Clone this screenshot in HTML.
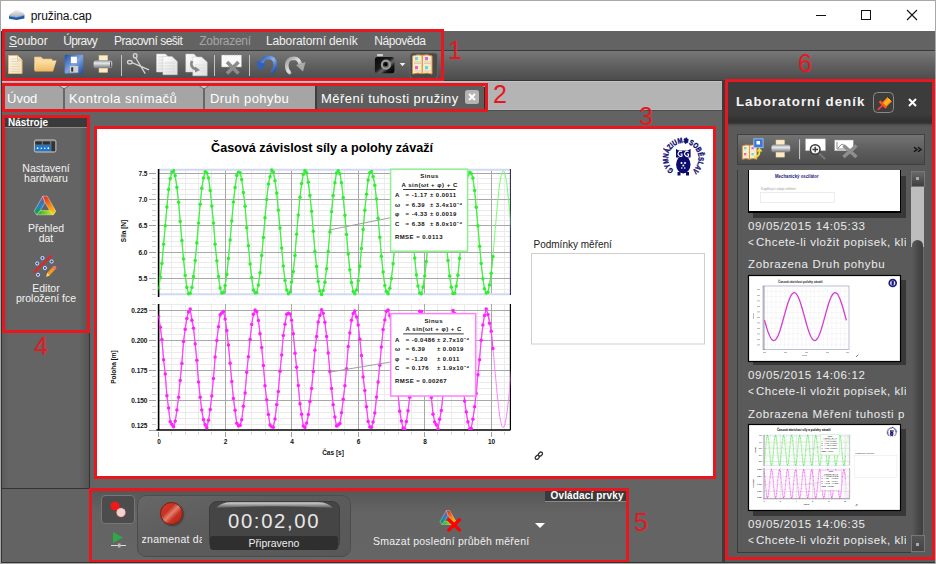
<!DOCTYPE html><html><head><meta charset="utf-8"><style>
*{margin:0;padding:0;box-sizing:content-box}
html,body{width:936px;height:564px;overflow:hidden;background:#636363}
body{position:relative;font-family:"Liberation Sans",sans-serif}
.a{position:absolute}
.rb{position:absolute;border:3px solid #e8171f;}
.rn{position:absolute;color:#e8171f;font-family:"Liberation Sans",sans-serif;line-height:1}
.menu span{position:absolute;top:34px;font-size:12px;color:#f0f0f0;white-space:nowrap;letter-spacing:-0.3px}
.tab{position:absolute;top:87px;height:23px;font-size:13px;color:#fff;white-space:nowrap;line-height:23px;letter-spacing:0.44px}
.tool{position:absolute;width:88px;text-align:center;font-size:10.5px;color:#f2f2f2;line-height:10px}
.jt{position:absolute;left:748px;font-size:11.5px;color:#ececec;white-space:nowrap;letter-spacing:0.63px}
</style></head><body>

<div class="a" style="left:0;top:0;width:936px;height:31px;background:#fff;border-top:1px solid #a8a8a8;box-sizing:border-box"></div>

<svg class="a" style="left:0;top:0" width="30" height="30" viewBox="0 0 30 30"><defs><linearGradient id="tig" x1="0" y1="0" x2="0" y2="1"><stop offset="0" stop-color="#f4f4f6"/><stop offset="1" stop-color="#a8acb4"/></linearGradient></defs><path d="M9 15 L16.3 9.6 L24.4 13.6 L24.4 15.6 L16.5 17.4 L9 16.4 Z" fill="url(#tig)"/><path d="M9 15.9 L16.5 17.3 L24.4 15.3 L24.4 18.6 L16.5 20 L9 18.7 Z" fill="#1f5aa4"/><path d="M9 15.9 L16.5 17.3 L24.4 15.3" fill="none" stroke="#7fa4d8" stroke-width="0.6"/></svg>
<div class="a" style="left:30.7px;top:9.3px;font-size:12px;color:#111;letter-spacing:-0.1px">pružina.cap</div>
<div class="a" style="left:816px;top:15px;width:10px;height:1px;background:#111"></div>
<div class="a" style="left:861px;top:10px;width:8px;height:8px;border:1px solid #111"></div>
<svg class="a" style="left:906px;top:9px" width="12" height="12" viewBox="0 0 12 12"><path d="M1 1 L11 11 M11 1 L1 11" stroke="#111" stroke-width="1.1"/></svg>

<div class="a" style="left:1px;top:31px;width:934px;height:19px;background:#636363"></div>
<div class="a" style="left:1px;top:50px;width:934px;height:1px;background:#3a3a3a"></div>
<div class="menu">
<span style="left:9px;letter-spacing:0"><u>S</u>oubor</span>
<span style="left:63.3px;letter-spacing:-0.7px">Úpravy</span>
<span style="left:114px;letter-spacing:-0.5px">Pracovní sešit</span>
<span style="left:199.3px;color:#a6a6a6;letter-spacing:-0.28px">Zobrazení</span>
<span style="left:266px;letter-spacing:-0.14px">Laboratorní deník</span>
<span style="left:374.3px;letter-spacing:-0.43px">Nápověda</span>
</div>

<div class="a" style="left:1px;top:51px;width:934px;height:29px;background:linear-gradient(#787878,#646464 40%,#4c4c4c)"></div>

<svg class="a" style="left:0;top:50px" width="936" height="31" viewBox="0 50 936 31">
<defs>
<linearGradient id="gpaper" x1="0" y1="0" x2="1" y2="1"><stop offset="0" stop-color="#fffaf0"/><stop offset="1" stop-color="#f5dfb0"/></linearGradient>
<linearGradient id="gfold" x1="0" y1="0" x2="0" y2="1"><stop offset="0" stop-color="#fde2a8"/><stop offset="1" stop-color="#f0b860"/></linearGradient>
<linearGradient id="gsave" x1="0" y1="0" x2="1" y2="1"><stop offset="0" stop-color="#1e4fa8"/><stop offset="0.5" stop-color="#7fa4e0"/><stop offset="1" stop-color="#1c4aa0"/></linearGradient>
<linearGradient id="gprn" x1="0" y1="0" x2="0" y2="1"><stop offset="0" stop-color="#8a8e92"/><stop offset="0.35" stop-color="#e8eaec"/><stop offset="1" stop-color="#6a6e72"/></linearGradient>
<linearGradient id="gpg" x1="0" y1="0" x2="1" y2="1"><stop offset="0" stop-color="#ffffff"/><stop offset="1" stop-color="#dcdcdc"/></linearGradient>
<linearGradient id="gundo" x1="0" y1="0" x2="1" y2="1"><stop offset="0" stop-color="#2a60c8"/><stop offset="0.5" stop-color="#8ab4f0"/><stop offset="1" stop-color="#1a4ab0"/></linearGradient>
<linearGradient id="gredo" x1="0" y1="0" x2="1" y2="1"><stop offset="0" stop-color="#9a9a9a"/><stop offset="0.5" stop-color="#e0e0e0"/><stop offset="1" stop-color="#8a8a8a"/></linearGradient>
<linearGradient id="gcam" x1="0" y1="0" x2="1" y2="1"><stop offset="0" stop-color="#080808"/><stop offset="0.45" stop-color="#1a1a1a"/><stop offset="0.6" stop-color="#6a6a6a"/><stop offset="0.75" stop-color="#141414"/><stop offset="1" stop-color="#000"/></linearGradient>
</defs>
<!-- new doc -->
<path d="M8.5 55.5 H17.5 L22 60 V73.5 H8.5 Z" fill="url(#gpaper)" stroke="#e2b878" stroke-width="1"/>
<path d="M17.5 55.5 V60 H22" fill="#f8e8c8" stroke="#e2b878" stroke-width="0.8"/>
<g stroke="#d8d0c0" stroke-width="0.8"><line x1="10.5" y1="59" x2="16" y2="59"/><line x1="10.5" y1="61.5" x2="20" y2="61.5"/><line x1="10.5" y1="64" x2="20" y2="64"/><line x1="10.5" y1="66.5" x2="20" y2="66.5"/><line x1="10.5" y1="69" x2="20" y2="69"/><line x1="10.5" y1="71.5" x2="20" y2="71.5"/></g>
<!-- folder -->
<path d="M34.5 57 H41 L43 59 H52 V70 H34.5 Z" fill="#f6d8a0" stroke="#e8c080" stroke-width="0.6"/>
<path d="M37.5 60.5 H56.5 L53 71.5 H34.5 Z" fill="url(#gfold)"/>
<!-- save -->
<rect x="64.7" y="54.7" width="18.6" height="18.9" rx="1.2" fill="url(#gsave)"/>
<rect x="70.9" y="56.7" width="6" height="6.4" fill="#fff"/>
<rect x="69.9" y="66" width="8.3" height="6.6" fill="#d0d0d0"/><rect x="71.2" y="67.2" width="2" height="4.4" fill="#333"/>
<!-- printer -->
<rect x="99" y="55.4" width="8.7" height="6" fill="#fbecc8" stroke="#e8c890" stroke-width="0.5"/>
<rect x="93.6" y="60.2" width="18.6" height="8.3" rx="2.5" fill="url(#gprn)"/>
<rect x="110" y="62" width="1.2" height="5" fill="#555"/>
<rect x="99" y="68.2" width="8.7" height="4.2" fill="#fbecc8" stroke="#e8c890" stroke-width="0.5"/>
<line x1="121.5" y1="55" x2="121.5" y2="76" stroke="#c4c4c4" stroke-width="1"/>
<!-- scissors -->
<g stroke="#d4d4d4" stroke-width="1.3" fill="none"><ellipse cx="135.2" cy="55.8" rx="1.8" ry="2.2"/><ellipse cx="129.8" cy="62.2" rx="2.3" ry="1.7"/><path d="M135.8 58 L145.2 73.6 M132 62.6 L149 69.9"/></g>
<!-- copy -->
<path d="M156.5 54 H165.5 L170.4 59 V72 H156.5Z" fill="url(#gpg)" stroke="#c8c8c8" stroke-width="0.5"/>
<g stroke="#d0d0d0" stroke-width="0.7"><line x1="158" y1="57" x2="164" y2="57"/><line x1="158" y1="60" x2="168" y2="60"/><line x1="158" y1="63" x2="168" y2="63"/><line x1="158" y1="66" x2="168" y2="66"/><line x1="158" y1="69" x2="168" y2="69"/></g>
<path d="M162.9 56.5 H172 L177.3 61.5 V74.7 H162.9Z" fill="url(#gpg)" stroke="#c8c8c8" stroke-width="0.5"/>
<g stroke="#d0d0d0" stroke-width="0.7"><line x1="164.5" y1="63" x2="175" y2="63"/><line x1="164.5" y1="66" x2="175" y2="66"/><line x1="164.5" y1="69" x2="175" y2="69"/><line x1="164.5" y1="72" x2="175" y2="72"/></g>
<!-- paste -->
<path d="M185.8 54 H194 L197.6 58 V72 H185.8Z" fill="url(#gpg)" stroke="#c8c8c8" stroke-width="0.5"/>
<path d="M192.8 57 H201.5 L207.2 62 V75.8 H192.8Z" fill="url(#gpg)" stroke="#c8c8c8" stroke-width="0.5"/>
<g stroke="#d8d8d8" stroke-width="0.7"><line x1="195" y1="65" x2="205" y2="65"/><line x1="195" y1="68" x2="205" y2="68"/><line x1="195" y1="71" x2="205" y2="71"/></g>
<path d="M192 61 Q189.5 67 196 69.5" fill="none" stroke="#888" stroke-width="2.6"/><path d="M195 66.5 L200 70 L195 72.5 Z" fill="#888"/>
<line x1="214.5" y1="55" x2="214.5" y2="76" stroke="#c4c4c4" stroke-width="1"/>
<!-- delete -->
<rect x="221.5" y="55" width="20" height="12" fill="#fafafa" stroke="#aaa" stroke-width="0.8" stroke-dasharray="1.5 1"/>
<path d="M227 62 L238.5 73.5 M238.5 62 L227 73.5" stroke="#8c8c8c" stroke-width="3.6"/>
<line x1="249.5" y1="55" x2="249.5" y2="76" stroke="#c4c4c4" stroke-width="1"/>
<!-- undo -->
<path d="M261.5 63.5 Q263 57.5 268 57.3 Q275 57.3 275.3 64.5 Q275.3 69 272.5 71.5" fill="none" stroke="url(#gundo)" stroke-width="3.6" stroke-linecap="round"/>
<path d="M256.5 61 L266 64 L259 70.5 Z" fill="#2a62c8"/>
<!-- redo -->
<path d="M300.5 64.5 Q299 58.5 294 58.3 Q287 58.3 286.7 65.5 Q286.7 70 289.5 72.5" fill="none" stroke="url(#gredo)" stroke-width="3.6" stroke-linecap="round"/>
<path d="M305.5 62 L296 65 L303 71.5 Z" fill="#a8a8a8"/>
<!-- camera -->
<rect x="377" y="54" width="6" height="2.2" rx="0.8" fill="#cfcfcf"/>
<rect x="374.9" y="56.9" width="19.5" height="16.3" rx="2.5" fill="url(#gcam)"/>
<circle cx="385.9" cy="64.7" r="4" fill="none" stroke="#9a9a9a" stroke-width="2.2"/><circle cx="385.9" cy="64.7" r="1.6" fill="#000"/>
<path d="M399.7 63 H405.4 L402.5 66.3 Z" fill="#f0f0f0"/>
<!-- book button -->
<rect x="410" y="53" width="27.5" height="25.5" rx="3" fill="#4a4a4a" stroke="#6a6a6a" stroke-width="0.8"/>
<path d="M412.5 56 Q417 54.2 422.3 55.2 V73.5 Q417 72.5 412.5 74 Z" fill="#fbecc8" stroke="#d89040" stroke-width="1"/>
<path d="M422.3 55.2 Q427.5 54.2 432 56 V74 Q427.5 72.5 422.3 73.5 Z" fill="#fbecc8" stroke="#d89040" stroke-width="1"/>
<rect x="415" y="57" width="3" height="3.2" fill="#60d8e8"/><rect x="425" y="57" width="3" height="3.2" fill="#e060e0"/><rect x="415" y="66" width="3" height="3.2" fill="#e060e0"/><rect x="425" y="66" width="3" height="3.2" fill="#60d8e8"/>
<g stroke="#c8b898" stroke-width="0.6"><line x1="414" y1="62" x2="421" y2="62"/><line x1="414" y1="63.5" x2="421" y2="63.5"/><line x1="424" y1="62" x2="431" y2="62"/><line x1="424" y1="63.5" x2="431" y2="63.5"/><line x1="414" y1="71" x2="421" y2="71"/><line x1="424" y1="71" x2="431" y2="71"/></g>
</svg>

<div class="a" style="left:1px;top:80px;width:721px;height:1px;background:#363636"></div>
<div class="a" style="left:1px;top:81px;width:721px;height:29px;background:#b4b4b4;border-top:1px solid #c4c4c4;border-bottom:1px solid #bcbcbc;box-sizing:border-box"></div>
<div class="a" style="left:5px;top:86px;width:310px;height:23px;background:#a5a5a5"></div>
<div class="a" style="left:1px;top:110px;width:721px;height:1px;background:#4c4c4c"></div>
<div class="a" style="left:63px;top:87px;width:2px;height:22px;background:#676767"></div>
<div class="a" style="left:203px;top:87px;width:2px;height:22px;background:#676767"></div>
<svg class="a" style="left:58px;top:85px" width="12" height="4"><path d="M1 0.5 L5 3.5 H7 L11 0.5" fill="#c8c8c8" stroke="#6a6a6a" stroke-width="1"/></svg>
<svg class="a" style="left:198px;top:85px" width="12" height="4"><path d="M1 0.5 L5 3.5 H7 L11 0.5" fill="#c8c8c8" stroke="#6a6a6a" stroke-width="1"/></svg>
<div class="a" style="left:315px;top:86px;width:2px;height:23px;background:#3e3e3e"></div>
<div class="a" style="left:317px;top:86px;width:168px;height:23px;background:#5e5e5e;border-top-right-radius:3px"></div>
<div class="a" style="left:484px;top:87px;width:1px;height:22px;background:#2e2e2e"></div>
<div class="tab" style="left:7px;letter-spacing:0">Úvod</div>
<div class="tab" style="left:69px">Kontrola snímačů</div>
<div class="tab" style="left:210px">Druh pohybu</div>
<div class="tab" style="left:321px">Měření tuhosti pružiny</div>
<div class="a" style="left:465px;top:90px;width:14px;height:14px;background:#b4b4b4;border-radius:2.5px"></div>
<svg class="a" style="left:465px;top:90px" width="14" height="14"><path d="M4 4 L10 10 M10 4 L4 10" stroke="#fff" stroke-width="2"/></svg>

<div class="a" style="left:722px;top:80px;width:3px;height:484px;background:#3c3c3c"></div>
<div class="a" style="left:1px;top:116px;width:88px;height:372px;background:linear-gradient(90deg,#5a5a5a,#646464 8px,#646464 78px,#545454)"></div>
<div class="a" style="left:89px;top:116px;width:1px;height:372px;background:#333"></div>
<div class="a" style="left:5px;top:118px;width:82px;height:9px;background:#3a3a3a;border-bottom:1px solid #8a8a8a"></div>
<div class="a" style="left:8px;top:117px;font-size:10px;font-weight:bold;color:#fff">Nástroje</div>
<div class="a" style="left:1px;top:488px;width:89px;height:1px;background:#333"></div>

<svg class="a" style="left:26px;top:132px" width="40" height="28" viewBox="26 132 40 28"><rect x="34.4" y="140" width="21.5" height="12" rx="1.5" fill="#6a6a6a" stroke="#d0d0d0" stroke-width="0.9"/><rect x="35.3" y="141.6" width="6.4" height="3" rx="0.8" fill="#2e2e2e"/><rect x="43" y="141.6" width="6.8" height="3" rx="0.8" fill="#2e2e2e"/><rect x="35" y="145.3" width="16" height="5.8" rx="1" fill="#1a7ad0"/><g fill="#fff"><circle cx="37.6" cy="148.2" r="0.9"/><circle cx="41.3" cy="148.2" r="0.8"/><circle cx="44.8" cy="148.2" r="0.8"/><circle cx="48.3" cy="148.2" r="0.9"/></g><rect x="51.5" y="141.5" width="3.6" height="9.6" fill="#333"/></svg>
<div class="tool" style="left:2px;top:163px">Nastavení<br>hardwaru</div>
<svg class="a" style="left:33px;top:195px" width="24" height="21" viewBox="0 0 24 21"><defs><linearGradient id="tgl" gradientUnits="userSpaceOnUse" x1="3" y1="19" x2="12" y2="1"><stop offset="0" stop-color="#10a040"/><stop offset="0.5" stop-color="#2080d0"/><stop offset="1" stop-color="#c04050"/></linearGradient>
<linearGradient id="tgr" gradientUnits="userSpaceOnUse" x1="12" y1="1" x2="21" y2="19"><stop offset="0" stop-color="#e02828"/><stop offset="0.5" stop-color="#f88010"/><stop offset="1" stop-color="#ffd800"/></linearGradient>
<linearGradient id="tgb" gradientUnits="userSpaceOnUse" x1="4" y1="0" x2="21" y2="0"><stop offset="0" stop-color="#10b030"/><stop offset="1" stop-color="#f0f000"/></linearGradient>
<symbol id="tri" viewBox="0 0 24 21"><g stroke="#f0f0f0" stroke-width="0.45" stroke-linejoin="round">
<path d="M3.6 19.8 L7.2 15.6 L16.8 15.6 L20.4 19.8 Z" fill="url(#tgb)"/>
<path d="M1.2 16.2 L9.8 1.2 L12 7.4 L7.2 15.6 L3.6 19.8 Z" fill="url(#tgl)"/>
<path d="M9.8 1.2 L14.2 1.2 L22.8 16.2 L20.4 19.8 L16.8 15.6 L12 7.4 Z" fill="url(#tgr)"/>
</g></symbol></defs><use href="#tri" x="0" y="0" width="24" height="21"/></svg>
<div class="tool" style="left:2px;top:223px">Přehled<br>dat</div>
<svg class="a" style="left:26px;top:250px" width="40" height="32" viewBox="26 250 40 32"><line x1="34.4" y1="272" x2="51.4" y2="255.9" stroke="#ee2020" stroke-width="1.9" stroke-linecap="round"/><g fill="#1a50f0" stroke="#f4f4f4" stroke-width="0.9"><circle cx="42.5" cy="258" r="1.6"/><circle cx="37.2" cy="263.5" r="1.6"/><circle cx="51.6" cy="261.5" r="1.6"/><circle cx="44.9" cy="268" r="1.6"/><circle cx="38" cy="274.8" r="1.6"/></g><path d="M46.2 276.8 L47.3 272.8 L53.2 266.6 L55.6 269 L49.6 275.4 Z" fill="#f59a20"/><path d="M46.2 276.8 L47.3 272.8 L49.6 275.4 Z" fill="#f0e080"/><circle cx="54.5" cy="267.6" r="1.9" fill="#f07070"/></svg>
<div class="tool" style="left:2px;top:283px">Editor<br>proložení fce</div>

<div class="a" style="left:97px;top:129px;width:616px;height:347px;background:#fff"></div>
<svg class="a" style="left:97px;top:129px" width="616" height="347" viewBox="97 129 616 347"><defs><g id="chartg">
<text x="322" y="151.5" text-anchor="middle" font-family="Liberation Sans" font-weight="bold" font-size="12.6" fill="#000">Časová závislost síly a polohy závaží</text>
<path id="mlgp" d="M673.94 170.28 A15.2 15.2 0 1 1 692.66 170.28" fill="none"/>
<text font-family="Liberation Sans" font-weight="bold" font-size="7.6" fill="#0c0c6e" stroke="#0c0c6e" stroke-width="0.35"><textPath href="#mlgp" textLength="75.3" lengthAdjust="spacingAndGlyphs">GYMNÁZIUM✱SOBĚSLAV</textPath></text>
<g fill="#0c0c6e"><path d="M676 149 L679 150.5 H687.5 L690.6 149 V157.5 L676 157.5 Z"/><ellipse cx="683.3" cy="164.5" rx="7.2" ry="9"/><rect x="677.5" y="172" width="3" height="3.5"/><rect x="686" y="172" width="3" height="3.5"/></g>
<g fill="none" stroke="#fff" stroke-width="1.1"><path d="M682 151.5 A2.6 2.6 0 1 0 682 156 V154 H680.5"/><path d="M688.5 151.5 A2.6 2.6 0 1 0 688.5 156 V154 H687"/></g>
<g fill="#fff"><circle cx="681.5" cy="163" r="1"/><circle cx="685" cy="163" r="1"/><circle cx="683.3" cy="165.5" r="1"/><circle cx="681.8" cy="168" r="0.8"/><circle cx="684.8" cy="168" r="0.8"/></g>
<rect x="158.6" y="169.0" width="351.79999999999995" height="126.0" fill="#fff"/>
<line x1="158.6" x2="510.4" y1="294.5" y2="294.5" stroke="#ebebeb" stroke-width="1"/>
<line x1="152" x2="156" y1="294.5" y2="294.5" stroke="#d0d0d0" stroke-width="1"/>
<line x1="158.6" x2="510.4" y1="289.5" y2="289.5" stroke="#ebebeb" stroke-width="1"/>
<line x1="152" x2="156" y1="289.5" y2="289.5" stroke="#d0d0d0" stroke-width="1"/>
<line x1="158.6" x2="510.4" y1="283.5" y2="283.5" stroke="#ebebeb" stroke-width="1"/>
<line x1="152" x2="156" y1="283.5" y2="283.5" stroke="#d0d0d0" stroke-width="1"/>
<line x1="158.6" x2="510.4" y1="273.5" y2="273.5" stroke="#ebebeb" stroke-width="1"/>
<line x1="152" x2="156" y1="273.5" y2="273.5" stroke="#d0d0d0" stroke-width="1"/>
<line x1="158.6" x2="510.4" y1="267.5" y2="267.5" stroke="#ebebeb" stroke-width="1"/>
<line x1="152" x2="156" y1="267.5" y2="267.5" stroke="#d0d0d0" stroke-width="1"/>
<line x1="158.6" x2="510.4" y1="262.5" y2="262.5" stroke="#ebebeb" stroke-width="1"/>
<line x1="152" x2="156" y1="262.5" y2="262.5" stroke="#d0d0d0" stroke-width="1"/>
<line x1="158.6" x2="510.4" y1="257.5" y2="257.5" stroke="#ebebeb" stroke-width="1"/>
<line x1="152" x2="156" y1="257.5" y2="257.5" stroke="#d0d0d0" stroke-width="1"/>
<line x1="158.6" x2="510.4" y1="246.5" y2="246.5" stroke="#ebebeb" stroke-width="1"/>
<line x1="152" x2="156" y1="246.5" y2="246.5" stroke="#d0d0d0" stroke-width="1"/>
<line x1="158.6" x2="510.4" y1="241.5" y2="241.5" stroke="#ebebeb" stroke-width="1"/>
<line x1="152" x2="156" y1="241.5" y2="241.5" stroke="#d0d0d0" stroke-width="1"/>
<line x1="158.6" x2="510.4" y1="236.5" y2="236.5" stroke="#ebebeb" stroke-width="1"/>
<line x1="152" x2="156" y1="236.5" y2="236.5" stroke="#d0d0d0" stroke-width="1"/>
<line x1="158.6" x2="510.4" y1="231.5" y2="231.5" stroke="#ebebeb" stroke-width="1"/>
<line x1="152" x2="156" y1="231.5" y2="231.5" stroke="#d0d0d0" stroke-width="1"/>
<line x1="158.6" x2="510.4" y1="220.5" y2="220.5" stroke="#ebebeb" stroke-width="1"/>
<line x1="152" x2="156" y1="220.5" y2="220.5" stroke="#d0d0d0" stroke-width="1"/>
<line x1="158.6" x2="510.4" y1="215.5" y2="215.5" stroke="#ebebeb" stroke-width="1"/>
<line x1="152" x2="156" y1="215.5" y2="215.5" stroke="#d0d0d0" stroke-width="1"/>
<line x1="158.6" x2="510.4" y1="210.5" y2="210.5" stroke="#ebebeb" stroke-width="1"/>
<line x1="152" x2="156" y1="210.5" y2="210.5" stroke="#d0d0d0" stroke-width="1"/>
<line x1="158.6" x2="510.4" y1="204.5" y2="204.5" stroke="#ebebeb" stroke-width="1"/>
<line x1="152" x2="156" y1="204.5" y2="204.5" stroke="#d0d0d0" stroke-width="1"/>
<line x1="158.6" x2="510.4" y1="194.5" y2="194.5" stroke="#ebebeb" stroke-width="1"/>
<line x1="152" x2="156" y1="194.5" y2="194.5" stroke="#d0d0d0" stroke-width="1"/>
<line x1="158.6" x2="510.4" y1="189.5" y2="189.5" stroke="#ebebeb" stroke-width="1"/>
<line x1="152" x2="156" y1="189.5" y2="189.5" stroke="#d0d0d0" stroke-width="1"/>
<line x1="158.6" x2="510.4" y1="183.5" y2="183.5" stroke="#ebebeb" stroke-width="1"/>
<line x1="152" x2="156" y1="183.5" y2="183.5" stroke="#d0d0d0" stroke-width="1"/>
<line x1="158.6" x2="510.4" y1="178.5" y2="178.5" stroke="#ebebeb" stroke-width="1"/>
<line x1="152" x2="156" y1="178.5" y2="178.5" stroke="#d0d0d0" stroke-width="1"/>
<line x1="171.5" x2="171.5" y1="169.0" y2="295.0" stroke="#ebebeb" stroke-width="1"/>
<line x1="185.5" x2="185.5" y1="169.0" y2="295.0" stroke="#ebebeb" stroke-width="1"/>
<line x1="198.5" x2="198.5" y1="169.0" y2="295.0" stroke="#ebebeb" stroke-width="1"/>
<line x1="211.5" x2="211.5" y1="169.0" y2="295.0" stroke="#ebebeb" stroke-width="1"/>
<line x1="238.5" x2="238.5" y1="169.0" y2="295.0" stroke="#ebebeb" stroke-width="1"/>
<line x1="251.5" x2="251.5" y1="169.0" y2="295.0" stroke="#ebebeb" stroke-width="1"/>
<line x1="265.5" x2="265.5" y1="169.0" y2="295.0" stroke="#ebebeb" stroke-width="1"/>
<line x1="278.5" x2="278.5" y1="169.0" y2="295.0" stroke="#ebebeb" stroke-width="1"/>
<line x1="304.5" x2="304.5" y1="169.0" y2="295.0" stroke="#ebebeb" stroke-width="1"/>
<line x1="318.5" x2="318.5" y1="169.0" y2="295.0" stroke="#ebebeb" stroke-width="1"/>
<line x1="331.5" x2="331.5" y1="169.0" y2="295.0" stroke="#ebebeb" stroke-width="1"/>
<line x1="344.5" x2="344.5" y1="169.0" y2="295.0" stroke="#ebebeb" stroke-width="1"/>
<line x1="371.5" x2="371.5" y1="169.0" y2="295.0" stroke="#ebebeb" stroke-width="1"/>
<line x1="384.5" x2="384.5" y1="169.0" y2="295.0" stroke="#ebebeb" stroke-width="1"/>
<line x1="398.5" x2="398.5" y1="169.0" y2="295.0" stroke="#ebebeb" stroke-width="1"/>
<line x1="411.5" x2="411.5" y1="169.0" y2="295.0" stroke="#ebebeb" stroke-width="1"/>
<line x1="437.5" x2="437.5" y1="169.0" y2="295.0" stroke="#ebebeb" stroke-width="1"/>
<line x1="451.5" x2="451.5" y1="169.0" y2="295.0" stroke="#ebebeb" stroke-width="1"/>
<line x1="464.5" x2="464.5" y1="169.0" y2="295.0" stroke="#ebebeb" stroke-width="1"/>
<line x1="477.5" x2="477.5" y1="169.0" y2="295.0" stroke="#ebebeb" stroke-width="1"/>
<line x1="504.5" x2="504.5" y1="169.0" y2="295.0" stroke="#ebebeb" stroke-width="1"/>
<line x1="225.5" x2="225.5" y1="169.0" y2="295.0" stroke="#a8a8a8" stroke-width="1"/>
<line x1="291.5" x2="291.5" y1="169.0" y2="295.0" stroke="#a8a8a8" stroke-width="1"/>
<line x1="358.5" x2="358.5" y1="169.0" y2="295.0" stroke="#a8a8a8" stroke-width="1"/>
<line x1="424.5" x2="424.5" y1="169.0" y2="295.0" stroke="#a8a8a8" stroke-width="1"/>
<line x1="491.5" x2="491.5" y1="169.0" y2="295.0" stroke="#a8a8a8" stroke-width="1"/>
<line x1="158.6" x2="510.4" y1="173.5" y2="173.5" stroke="#a8a8a8" stroke-width="1"/>
<line x1="149" x2="156" y1="173.5" y2="173.5" stroke="#a0a0a0" stroke-width="1"/>
<text x="147.5" y="175.7" text-anchor="end" font-family="Liberation Sans" font-weight="bold" font-size="6.5" fill="#111">7.5</text>
<line x1="158.6" x2="510.4" y1="199.5" y2="199.5" stroke="#a8a8a8" stroke-width="1"/>
<line x1="149" x2="156" y1="199.5" y2="199.5" stroke="#a0a0a0" stroke-width="1"/>
<text x="147.5" y="202.0" text-anchor="end" font-family="Liberation Sans" font-weight="bold" font-size="6.5" fill="#111">7.0</text>
<line x1="158.6" x2="510.4" y1="225.5" y2="225.5" stroke="#a8a8a8" stroke-width="1"/>
<line x1="149" x2="156" y1="225.5" y2="225.5" stroke="#a0a0a0" stroke-width="1"/>
<text x="147.5" y="228.2" text-anchor="end" font-family="Liberation Sans" font-weight="bold" font-size="6.5" fill="#111">6.5</text>
<line x1="158.6" x2="510.4" y1="252.5" y2="252.5" stroke="#a8a8a8" stroke-width="1"/>
<line x1="149" x2="156" y1="252.5" y2="252.5" stroke="#a0a0a0" stroke-width="1"/>
<text x="147.5" y="254.5" text-anchor="end" font-family="Liberation Sans" font-weight="bold" font-size="6.5" fill="#111">6.0</text>
<line x1="158.6" x2="510.4" y1="278.5" y2="278.5" stroke="#a8a8a8" stroke-width="1"/>
<line x1="149" x2="156" y1="278.5" y2="278.5" stroke="#a0a0a0" stroke-width="1"/>
<text x="147.5" y="280.8" text-anchor="end" font-family="Liberation Sans" font-weight="bold" font-size="6.5" fill="#111">5.5</text>
<line x1="158.6" x2="510.4" y1="169.8" y2="169.8" stroke="#d0d8f4" stroke-width="2"/>
<line x1="158.6" x2="510.4" y1="294.2" y2="294.2" stroke="#d0d8f4" stroke-width="2"/>
<line x1="158.6" x2="158.6" y1="169.0" y2="297.0" stroke="#000" stroke-width="1.6"/>
<line x1="510.4" x2="510.4" y1="169.0" y2="295.0" stroke="#1a1a50" stroke-width="1"/>
<text transform="translate(126,231) rotate(-90)" text-anchor="middle" font-family="Liberation Sans" font-weight="bold" font-size="6.5" fill="#111">Síla [N]</text>
<clipPath id="mcpt"><rect x="158.6" y="167.0" width="351.79999999999995" height="130.0"/></clipPath>
<g clip-path="url(#mcpt)">
<polyline fill="none" stroke="#70ff70" stroke-width="1" points="158.6,288.5 159.3,285.0 159.9,280.5 160.6,275.4 161.3,269.5 161.9,263.0 162.6,256.0 163.3,248.7 163.9,241.1 164.6,233.3 165.3,225.6 165.9,217.9 166.6,210.5 167.2,203.4 167.9,196.8 168.6,190.7 169.2,185.3 169.9,180.7 170.6,176.9 171.2,174.0 171.9,172.0 172.6,170.9 173.2,170.9 173.9,171.8 174.6,173.7 175.2,176.5 175.9,180.3 176.6,184.8 177.2,190.1 177.9,196.1 178.6,202.7 179.2,209.7 179.9,217.1 180.6,224.8 181.2,232.5 181.9,240.3 182.5,247.9 183.2,255.3 183.9,262.3 184.5,268.8 185.2,274.8 185.9,280.0 186.5,284.5 187.2,288.2 187.9,291.0 188.5,292.8 189.2,293.7 189.9,293.5 190.5,292.5 191.2,290.4 191.9,287.4 192.5,283.5 193.2,278.8 193.9,273.4 194.5,267.3 195.2,260.6 195.9,253.5 196.5,246.1 197.2,238.4 197.8,230.6 198.5,222.9 199.2,215.3 199.8,208.0 200.5,201.0 201.2,194.6 201.8,188.8 202.5,183.6 203.2,179.3 203.8,175.8 204.5,173.2 205.2,171.5 205.8,170.8 206.5,171.1 207.2,172.4 207.8,174.6 208.5,177.7 209.2,181.7 209.8,186.6 210.5,192.1 211.2,198.3 211.8,205.1 212.5,212.2 213.1,219.7 213.8,227.4 214.5,235.2 215.1,242.9 215.8,250.5 216.5,257.8 217.1,264.6 217.8,271.0 218.5,276.7 219.1,281.7 219.8,285.9 220.5,289.3 221.1,291.7 221.8,293.2 222.5,293.7 223.1,293.3 223.8,291.8 224.5,289.5 225.1,286.2 225.8,282.0 226.5,277.0 227.1,271.4 227.8,265.1 228.4,258.2 229.1,251.0 229.8,243.4 230.4,235.7 231.1,228.0 231.8,220.2 232.4,212.7 233.1,205.5 233.8,198.8 234.4,192.5 235.1,186.9 235.8,182.0 236.4,178.0 237.1,174.8 237.8,172.5 238.4,171.1 239.1,170.8 239.8,171.4 240.4,173.0 241.1,175.6 241.8,179.0 242.4,183.3 243.1,188.4 243.7,194.2 244.4,200.6 245.1,207.5 245.7,214.8 246.4,222.4 247.1,230.1 247.7,237.9 248.4,245.6 249.1,253.1 249.7,260.2 250.4,266.9 251.1,273.0 251.7,278.5 252.4,283.2 253.1,287.2 253.7,290.2 254.4,292.3 255.1,293.5 255.7,293.7 256.4,292.9 257.0,291.1 257.7,288.4 258.4,284.8 259.0,280.4 259.7,275.1 260.4,269.2 261.0,262.7 261.7,255.8 262.4,248.4 263.0,240.8 263.7,233.0 264.4,225.3 265.0,217.6 265.7,210.2 266.4,203.1 267.0,196.5 267.7,190.5 268.4,185.1 269.0,180.5 269.7,176.7 270.4,173.9 271.0,171.9 271.7,170.9 272.3,170.9 273.0,171.9 273.7,173.8 274.3,176.7 275.0,180.4 275.7,185.0 276.3,190.3 277.0,196.4 277.7,202.9 278.3,210.0 279.0,217.4 279.7,225.1 280.3,232.8 281.0,240.6 281.7,248.2 282.3,255.6 283.0,262.6 283.7,269.1 284.3,275.0 285.0,280.2 285.7,284.7 286.3,288.3 287.0,291.1 287.6,292.9 288.3,293.7 289.0,293.5 289.6,292.4 290.3,290.3 291.0,287.3 291.6,283.4 292.3,278.6 293.0,273.2 293.6,267.0 294.3,260.4 295.0,253.2 295.6,245.8 296.3,238.1 297.0,230.3 297.6,222.6 298.3,215.0 299.0,207.7 299.6,200.8 300.3,194.4 301.0,188.6 301.6,183.5 302.3,179.1 302.9,175.6 303.6,173.1 304.3,171.4 304.9,170.8 305.6,171.1 306.3,172.4 306.9,174.7 307.6,177.9 308.3,181.9 308.9,186.8 309.6,192.4 310.3,198.6 310.9,205.3 311.6,212.5 312.3,220.0 312.9,227.7 313.6,235.5 314.3,243.2 314.9,250.8 315.6,258.0 316.3,264.9 316.9,271.2 317.6,276.9 318.2,281.9 318.9,286.1 319.6,289.4 320.2,291.8 320.9,293.3 321.6,293.7 322.2,293.2 322.9,291.8 323.6,289.3 324.2,286.0 324.9,281.8 325.6,276.8 326.2,271.1 326.9,264.8 327.6,258.0 328.2,250.7 328.9,243.1 329.6,235.4 330.2,227.6 330.9,219.9 331.6,212.4 332.2,205.3 332.9,198.5 333.5,192.3 334.2,186.7 334.9,181.9 335.5,177.8 336.2,174.6 336.9,172.4 337.5,171.1 338.2,170.8 338.9,171.5 339.5,173.1 340.2,175.7 340.9,179.2 341.5,183.5 342.2,188.6 342.9,194.4 343.5,200.9 344.2,207.8 344.9,215.1 345.5,222.7 346.2,230.4 346.9,238.2 347.5,245.9 348.2,253.3 348.8,260.5 349.5,267.1 350.2,273.2 350.8,278.7 351.5,283.4 352.2,287.3 352.8,290.3 353.5,292.4 354.2,293.5 354.8,293.7 355.5,292.8 356.2,291.0 356.8,288.3 357.5,284.6 358.2,280.2 358.8,274.9 359.5,269.0 360.2,262.5 360.8,255.5 361.5,248.1 362.2,240.5 362.8,232.7 363.5,225.0 364.1,217.3 364.8,209.9 365.5,202.9 366.1,196.3 366.8,190.3 367.5,184.9 368.1,180.4 368.8,176.6 369.5,173.8 370.1,171.8 370.8,170.9 371.5,170.9 372.1,171.9 372.8,173.9 373.5,176.8 374.1,180.6 374.8,185.2 375.5,190.6 376.1,196.6 376.8,203.2 377.5,210.3 378.1,217.7 378.8,225.4 379.4,233.1 380.1,240.9 380.8,248.5 381.4,255.8 382.1,262.8 382.8,269.3 383.4,275.2 384.1,280.4 384.8,284.9 385.4,288.5 386.1,291.2 386.8,292.9 387.4,293.7 388.1,293.5 388.8,292.3 389.4,290.2 390.1,287.1 390.8,283.2 391.4,278.4 392.1,272.9 392.8,266.8 393.4,260.1 394.1,253.0 394.7,245.5 395.4,237.8 396.1,230.0 396.7,222.3 397.4,214.7 398.1,207.4 398.7,200.5 399.4,194.1 400.1,188.4 400.7,183.3 401.4,179.0 402.1,175.5 402.7,173.0 403.4,171.4 404.1,170.8 404.7,171.1 405.4,172.5 406.1,174.8 406.7,178.0 407.4,182.1 408.0,187.0 408.7,192.6 409.4,198.8 410.0,205.6 410.7,212.8 411.4,220.3 412.0,228.0 412.7,235.8 413.4,243.5 414.0,251.1 414.7,258.3 415.4,265.1 416.0,271.4 416.7,277.1 417.4,282.0 418.0,286.2 418.7,289.5 419.4,291.9 420.0,293.3 420.7,293.7 421.4,293.2 422.0,291.7 422.7,289.2 423.3,285.9 424.0,281.6 424.7,276.6 425.3,270.9 426.0,264.5 426.7,257.7 427.3,250.4 428.0,242.9 428.7,235.1 429.3,227.3 430.0,219.7 430.7,212.2 431.3,205.0 432.0,198.3 432.7,192.1 433.3,186.5 434.0,181.7 434.7,177.7 435.3,174.5 436.0,172.3 436.7,171.1 437.3,170.8 438.0,171.5 438.6,173.2 439.3,175.8 440.0,179.3 440.6,183.7 441.3,188.8 442.0,194.7 442.6,201.1 443.3,208.1 444.0,215.4 444.6,223.0 445.3,230.7 446.0,238.5 446.6,246.2 447.3,253.6 448.0,260.7 448.6,267.4 449.3,273.5 450.0,278.9 450.6,283.6 451.3,287.4 452.0,290.4 452.6,292.5 453.3,293.6 453.9,293.7 454.6,292.8 455.3,290.9 455.9,288.2 456.6,284.5 457.3,280.0 457.9,274.7 458.6,268.8 459.3,262.2 459.9,255.2 460.6,247.8 461.3,240.2 461.9,232.4 462.6,224.7 463.3,217.0 463.9,209.6 464.6,202.6 465.3,196.0 465.9,190.1 466.6,184.8 467.3,180.2 467.9,176.5 468.6,173.7 469.2,171.8 469.9,170.9 470.6,170.9 471.2,172.0 471.9,174.0 472.6,176.9 473.2,180.7 473.9,185.4 474.6,190.8 475.2,196.9 475.9,203.5 476.6,210.6 477.2,218.0 477.9,225.7 478.6,233.4 479.2,241.2 479.9,248.8 480.6,256.1 481.2,263.1 481.9,269.6 482.6,275.4 483.2,280.6 483.9,285.0 484.5,288.6 485.2,291.2 485.9,293.0 486.5,293.7 487.2,293.5 487.9,292.3 488.5,290.1 489.2,287.0 489.9,283.0 490.5,278.2 491.2,272.7 491.9,266.6 492.5,259.8 493.2,252.7 493.9,245.2 494.5,237.5 495.2,229.7 495.9,222.0 496.5,214.4 497.2,207.2 497.9,200.3 498.5,193.9 499.2,188.1 499.8,183.1 500.5,178.8 501.2,175.4 501.8,172.9 502.5,171.4 503.2,170.8 503.8,171.2 504.5,172.6 505.2,174.9 505.8,178.1 506.5,182.3 507.2,187.2 507.8,192.8 508.5,199.1 509.2,205.9 509.8,213.1 510.5,220.6 511.2,228.3 511.8,236.1"/>
<polyline fill="none" stroke="#40f040" stroke-width="1.15" points="158.6,288.5 160.3,277.3 161.9,263.6 163.6,244.3 165.3,225.7 166.9,207.1 168.6,189.5 170.2,178.6 171.9,172.0 173.6,170.8 175.2,175.8 176.9,187.4 178.6,202.3 180.2,221.5 181.9,240.5 183.5,259.1 185.2,275.6 186.9,287.4 188.5,293.8 190.2,293.3 191.9,287.5 193.5,276.4 195.2,260.6 196.8,243.1 198.5,222.9 200.2,204.3 201.8,188.3 203.5,177.9 205.2,171.7 206.8,172.9 208.5,178.0 210.2,190.6 211.8,206.0 213.5,222.9 215.1,244.3 216.8,260.7 218.5,276.5 220.1,287.9 221.8,292.9 223.5,292.4 225.1,285.5 226.8,274.4 228.4,258.6 230.1,240.0 231.8,220.9 233.4,202.1 235.1,187.4 236.8,175.6 238.4,172.3 240.1,172.8 241.7,179.6 243.4,192.6 245.1,206.3 246.7,227.8 248.4,245.8 250.1,263.9 251.7,277.5 253.4,290.1 255.1,292.8 256.7,292.6 258.4,284.9 260.0,272.7 261.7,255.4 263.4,237.6 265.0,217.7 266.7,199.5 268.4,184.0 270.0,176.7 271.7,169.9 273.3,172.1 275.0,180.7 276.7,193.1 278.3,210.3 280.0,227.9 281.7,248.1 283.3,266.0 285.0,280.4 286.7,289.9 288.3,293.8 290.0,292.0 291.6,282.1 293.3,271.4 295.0,255.5 296.6,234.3 298.3,215.1 300.0,197.3 301.6,183.6 303.3,174.3 304.9,170.6 306.6,172.8 308.3,182.2 309.9,195.6 311.6,211.3 313.3,231.3 314.9,251.4 316.6,266.6 318.2,281.4 319.9,291.1 321.6,294.5 323.2,290.5 324.9,282.3 326.6,268.7 328.2,251.5 329.9,231.9 331.6,211.7 333.2,195.6 334.9,182.8 336.5,173.0 338.2,170.7 339.9,173.7 341.5,182.8 343.2,197.7 344.9,215.2 346.5,234.4 348.2,254.1 349.8,269.8 351.5,282.5 353.2,291.4 354.8,293.8 356.5,289.9 358.2,280.7 359.8,266.3 361.5,248.4 363.1,229.4 364.8,210.2 366.5,194.2 368.1,180.1 369.8,172.7 371.5,171.6 373.1,176.7 374.8,185.2 376.5,199.1 378.1,218.2 379.8,237.3 381.4,256.2 383.1,271.9 384.8,285.4 386.4,291.5 388.1,293.7 389.8,288.2 391.4,278.4 393.1,263.7 394.7,246.4 396.4,226.6 398.1,207.6 399.7,190.7 401.4,178.8 403.1,172.5 404.7,170.9 406.4,175.7 408.0,187.1 409.7,202.4 411.4,220.6 413.0,239.2 414.7,258.0 416.4,274.9 418.0,286.0 419.7,293.0 421.4,293.7 423.0,286.9 424.7,276.1 426.3,261.6 428.0,242.8 429.7,223.2 431.3,205.4 433.0,189.3 434.7,177.3 436.3,172.7 438.0,171.3 439.6,177.0 441.3,188.5 443.0,205.4 444.6,222.8 446.3,242.9 448.0,260.4 449.6,275.9 451.3,287.3 453.0,293.6 454.6,293.2 456.3,285.9 457.9,275.3 459.6,258.4 461.3,239.9 462.9,221.0 464.6,201.1 466.3,187.3 467.9,175.1 469.6,172.5 471.2,173.4 472.9,178.1 474.6,190.4 476.2,207.2 477.9,225.7 479.6,246.2 481.2,263.5 482.9,278.8 484.5,288.7 486.2,292.9 487.9,292.2 489.5,284.9 491.2,273.2 492.9,256.6"/>
<g fill="#30ee30"><circle cx="158.6" cy="288.5" r="1.75"/><circle cx="160.3" cy="277.3" r="1.75"/><circle cx="161.9" cy="263.6" r="1.75"/><circle cx="163.6" cy="244.3" r="1.75"/><circle cx="165.3" cy="225.7" r="1.75"/><circle cx="166.9" cy="207.1" r="1.75"/><circle cx="168.6" cy="189.5" r="1.75"/><circle cx="170.2" cy="178.6" r="1.75"/><circle cx="171.9" cy="172.0" r="1.75"/><circle cx="173.6" cy="170.8" r="1.75"/><circle cx="175.2" cy="175.8" r="1.75"/><circle cx="176.9" cy="187.4" r="1.75"/><circle cx="178.6" cy="202.3" r="1.75"/><circle cx="180.2" cy="221.5" r="1.75"/><circle cx="181.9" cy="240.5" r="1.75"/><circle cx="183.5" cy="259.1" r="1.75"/><circle cx="185.2" cy="275.6" r="1.75"/><circle cx="186.9" cy="287.4" r="1.75"/><circle cx="188.5" cy="293.8" r="1.75"/><circle cx="190.2" cy="293.3" r="1.75"/><circle cx="191.9" cy="287.5" r="1.75"/><circle cx="193.5" cy="276.4" r="1.75"/><circle cx="195.2" cy="260.6" r="1.75"/><circle cx="196.8" cy="243.1" r="1.75"/><circle cx="198.5" cy="222.9" r="1.75"/><circle cx="200.2" cy="204.3" r="1.75"/><circle cx="201.8" cy="188.3" r="1.75"/><circle cx="203.5" cy="177.9" r="1.75"/><circle cx="205.2" cy="171.7" r="1.75"/><circle cx="206.8" cy="172.9" r="1.75"/><circle cx="208.5" cy="178.0" r="1.75"/><circle cx="210.2" cy="190.6" r="1.75"/><circle cx="211.8" cy="206.0" r="1.75"/><circle cx="213.5" cy="222.9" r="1.75"/><circle cx="215.1" cy="244.3" r="1.75"/><circle cx="216.8" cy="260.7" r="1.75"/><circle cx="218.5" cy="276.5" r="1.75"/><circle cx="220.1" cy="287.9" r="1.75"/><circle cx="221.8" cy="292.9" r="1.75"/><circle cx="223.5" cy="292.4" r="1.75"/><circle cx="225.1" cy="285.5" r="1.75"/><circle cx="226.8" cy="274.4" r="1.75"/><circle cx="228.4" cy="258.6" r="1.75"/><circle cx="230.1" cy="240.0" r="1.75"/><circle cx="231.8" cy="220.9" r="1.75"/><circle cx="233.4" cy="202.1" r="1.75"/><circle cx="235.1" cy="187.4" r="1.75"/><circle cx="236.8" cy="175.6" r="1.75"/><circle cx="238.4" cy="172.3" r="1.75"/><circle cx="240.1" cy="172.8" r="1.75"/><circle cx="241.7" cy="179.6" r="1.75"/><circle cx="243.4" cy="192.6" r="1.75"/><circle cx="245.1" cy="206.3" r="1.75"/><circle cx="246.7" cy="227.8" r="1.75"/><circle cx="248.4" cy="245.8" r="1.75"/><circle cx="250.1" cy="263.9" r="1.75"/><circle cx="251.7" cy="277.5" r="1.75"/><circle cx="253.4" cy="290.1" r="1.75"/><circle cx="255.1" cy="292.8" r="1.75"/><circle cx="256.7" cy="292.6" r="1.75"/><circle cx="258.4" cy="284.9" r="1.75"/><circle cx="260.0" cy="272.7" r="1.75"/><circle cx="261.7" cy="255.4" r="1.75"/><circle cx="263.4" cy="237.6" r="1.75"/><circle cx="265.0" cy="217.7" r="1.75"/><circle cx="266.7" cy="199.5" r="1.75"/><circle cx="268.4" cy="184.0" r="1.75"/><circle cx="270.0" cy="176.7" r="1.75"/><circle cx="271.7" cy="169.9" r="1.75"/><circle cx="273.3" cy="172.1" r="1.75"/><circle cx="275.0" cy="180.7" r="1.75"/><circle cx="276.7" cy="193.1" r="1.75"/><circle cx="278.3" cy="210.3" r="1.75"/><circle cx="280.0" cy="227.9" r="1.75"/><circle cx="281.7" cy="248.1" r="1.75"/><circle cx="283.3" cy="266.0" r="1.75"/><circle cx="285.0" cy="280.4" r="1.75"/><circle cx="286.7" cy="289.9" r="1.75"/><circle cx="288.3" cy="293.8" r="1.75"/><circle cx="290.0" cy="292.0" r="1.75"/><circle cx="291.6" cy="282.1" r="1.75"/><circle cx="293.3" cy="271.4" r="1.75"/><circle cx="295.0" cy="255.5" r="1.75"/><circle cx="296.6" cy="234.3" r="1.75"/><circle cx="298.3" cy="215.1" r="1.75"/><circle cx="300.0" cy="197.3" r="1.75"/><circle cx="301.6" cy="183.6" r="1.75"/><circle cx="303.3" cy="174.3" r="1.75"/><circle cx="304.9" cy="170.6" r="1.75"/><circle cx="306.6" cy="172.8" r="1.75"/><circle cx="308.3" cy="182.2" r="1.75"/><circle cx="309.9" cy="195.6" r="1.75"/><circle cx="311.6" cy="211.3" r="1.75"/><circle cx="313.3" cy="231.3" r="1.75"/><circle cx="314.9" cy="251.4" r="1.75"/><circle cx="316.6" cy="266.6" r="1.75"/><circle cx="318.2" cy="281.4" r="1.75"/><circle cx="319.9" cy="291.1" r="1.75"/><circle cx="321.6" cy="294.5" r="1.75"/><circle cx="323.2" cy="290.5" r="1.75"/><circle cx="324.9" cy="282.3" r="1.75"/><circle cx="326.6" cy="268.7" r="1.75"/><circle cx="328.2" cy="251.5" r="1.75"/><circle cx="329.9" cy="231.9" r="1.75"/><circle cx="331.6" cy="211.7" r="1.75"/><circle cx="333.2" cy="195.6" r="1.75"/><circle cx="334.9" cy="182.8" r="1.75"/><circle cx="336.5" cy="173.0" r="1.75"/><circle cx="338.2" cy="170.7" r="1.75"/><circle cx="339.9" cy="173.7" r="1.75"/><circle cx="341.5" cy="182.8" r="1.75"/><circle cx="343.2" cy="197.7" r="1.75"/><circle cx="344.9" cy="215.2" r="1.75"/><circle cx="346.5" cy="234.4" r="1.75"/><circle cx="348.2" cy="254.1" r="1.75"/><circle cx="349.8" cy="269.8" r="1.75"/><circle cx="351.5" cy="282.5" r="1.75"/><circle cx="353.2" cy="291.4" r="1.75"/><circle cx="354.8" cy="293.8" r="1.75"/><circle cx="356.5" cy="289.9" r="1.75"/><circle cx="358.2" cy="280.7" r="1.75"/><circle cx="359.8" cy="266.3" r="1.75"/><circle cx="361.5" cy="248.4" r="1.75"/><circle cx="363.1" cy="229.4" r="1.75"/><circle cx="364.8" cy="210.2" r="1.75"/><circle cx="366.5" cy="194.2" r="1.75"/><circle cx="368.1" cy="180.1" r="1.75"/><circle cx="369.8" cy="172.7" r="1.75"/><circle cx="371.5" cy="171.6" r="1.75"/><circle cx="373.1" cy="176.7" r="1.75"/><circle cx="374.8" cy="185.2" r="1.75"/><circle cx="376.5" cy="199.1" r="1.75"/><circle cx="378.1" cy="218.2" r="1.75"/><circle cx="379.8" cy="237.3" r="1.75"/><circle cx="381.4" cy="256.2" r="1.75"/><circle cx="383.1" cy="271.9" r="1.75"/><circle cx="384.8" cy="285.4" r="1.75"/><circle cx="386.4" cy="291.5" r="1.75"/><circle cx="388.1" cy="293.7" r="1.75"/><circle cx="389.8" cy="288.2" r="1.75"/><circle cx="391.4" cy="278.4" r="1.75"/><circle cx="393.1" cy="263.7" r="1.75"/><circle cx="394.7" cy="246.4" r="1.75"/><circle cx="396.4" cy="226.6" r="1.75"/><circle cx="398.1" cy="207.6" r="1.75"/><circle cx="399.7" cy="190.7" r="1.75"/><circle cx="401.4" cy="178.8" r="1.75"/><circle cx="403.1" cy="172.5" r="1.75"/><circle cx="404.7" cy="170.9" r="1.75"/><circle cx="406.4" cy="175.7" r="1.75"/><circle cx="408.0" cy="187.1" r="1.75"/><circle cx="409.7" cy="202.4" r="1.75"/><circle cx="411.4" cy="220.6" r="1.75"/><circle cx="413.0" cy="239.2" r="1.75"/><circle cx="414.7" cy="258.0" r="1.75"/><circle cx="416.4" cy="274.9" r="1.75"/><circle cx="418.0" cy="286.0" r="1.75"/><circle cx="419.7" cy="293.0" r="1.75"/><circle cx="421.4" cy="293.7" r="1.75"/><circle cx="423.0" cy="286.9" r="1.75"/><circle cx="424.7" cy="276.1" r="1.75"/><circle cx="426.3" cy="261.6" r="1.75"/><circle cx="428.0" cy="242.8" r="1.75"/><circle cx="429.7" cy="223.2" r="1.75"/><circle cx="431.3" cy="205.4" r="1.75"/><circle cx="433.0" cy="189.3" r="1.75"/><circle cx="434.7" cy="177.3" r="1.75"/><circle cx="436.3" cy="172.7" r="1.75"/><circle cx="438.0" cy="171.3" r="1.75"/><circle cx="439.6" cy="177.0" r="1.75"/><circle cx="441.3" cy="188.5" r="1.75"/><circle cx="443.0" cy="205.4" r="1.75"/><circle cx="444.6" cy="222.8" r="1.75"/><circle cx="446.3" cy="242.9" r="1.75"/><circle cx="448.0" cy="260.4" r="1.75"/><circle cx="449.6" cy="275.9" r="1.75"/><circle cx="451.3" cy="287.3" r="1.75"/><circle cx="453.0" cy="293.6" r="1.75"/><circle cx="454.6" cy="293.2" r="1.75"/><circle cx="456.3" cy="285.9" r="1.75"/><circle cx="457.9" cy="275.3" r="1.75"/><circle cx="459.6" cy="258.4" r="1.75"/><circle cx="461.3" cy="239.9" r="1.75"/><circle cx="462.9" cy="221.0" r="1.75"/><circle cx="464.6" cy="201.1" r="1.75"/><circle cx="466.3" cy="187.3" r="1.75"/><circle cx="467.9" cy="175.1" r="1.75"/><circle cx="469.6" cy="172.5" r="1.75"/><circle cx="471.2" cy="173.4" r="1.75"/><circle cx="472.9" cy="178.1" r="1.75"/><circle cx="474.6" cy="190.4" r="1.75"/><circle cx="476.2" cy="207.2" r="1.75"/><circle cx="477.9" cy="225.7" r="1.75"/><circle cx="479.6" cy="246.2" r="1.75"/><circle cx="481.2" cy="263.5" r="1.75"/><circle cx="482.9" cy="278.8" r="1.75"/><circle cx="484.5" cy="288.7" r="1.75"/><circle cx="486.2" cy="292.9" r="1.75"/><circle cx="487.9" cy="292.2" r="1.75"/><circle cx="489.5" cy="284.9" r="1.75"/><circle cx="491.2" cy="273.2" r="1.75"/><circle cx="492.9" cy="256.6" r="1.75"/></g>
</g>
<line x1="329" y1="230" x2="391" y2="217.6" stroke="#a0a0a0" stroke-width="1"/>
<rect x="390.6" y="169.2" width="77" height="82" fill="#fff" stroke="#90f090" stroke-width="1.5"/>
<g font-family="Liberation Sans" font-weight="bold" font-size="6" fill="#111" letter-spacing="0.45">
<text x="429.6" y="178.2" text-anchor="middle">Sinus</text>
<text x="429.6" y="187.0" text-anchor="middle" letter-spacing="0.5">A sin(ωt + φ) + C</text>
<line x1="403.1" x2="455.6" y1="189.5" y2="189.5" stroke="#222" stroke-width="0.9"/>
<text x="394.9" y="197.2">A</text>
<text x="405.6" y="197.2">= -1.17</text>
<text x="430.0" y="197.2">± 0.0011</text>
<text x="394.9" y="206.8">ω</text>
<text x="405.6" y="206.8">= 6.39</text>
<text x="430.0" y="206.8">± 3.4x10⁻⁴</text>
<text x="394.9" y="216.3">φ</text>
<text x="405.6" y="216.3">= -4.33</text>
<text x="430.0" y="216.3">± 0.0019</text>
<text x="394.9" y="225.8">C</text>
<text x="405.6" y="225.8">= 6.38</text>
<text x="430.0" y="225.8">± 8.0x10⁻⁴</text>
<text x="394.9" y="238.7">RMSE = 0.0113</text>
</g>
<line x1="158.6" x2="510.4" y1="424.5" y2="424.5" stroke="#ebebeb" stroke-width="1"/>
<line x1="152" x2="156" y1="424.5" y2="424.5" stroke="#d0d0d0" stroke-width="1"/>
<line x1="158.6" x2="510.4" y1="418.5" y2="418.5" stroke="#ebebeb" stroke-width="1"/>
<line x1="152" x2="156" y1="418.5" y2="418.5" stroke="#d0d0d0" stroke-width="1"/>
<line x1="158.6" x2="510.4" y1="412.5" y2="412.5" stroke="#ebebeb" stroke-width="1"/>
<line x1="152" x2="156" y1="412.5" y2="412.5" stroke="#d0d0d0" stroke-width="1"/>
<line x1="158.6" x2="510.4" y1="406.5" y2="406.5" stroke="#ebebeb" stroke-width="1"/>
<line x1="152" x2="156" y1="406.5" y2="406.5" stroke="#d0d0d0" stroke-width="1"/>
<line x1="158.6" x2="510.4" y1="394.5" y2="394.5" stroke="#ebebeb" stroke-width="1"/>
<line x1="152" x2="156" y1="394.5" y2="394.5" stroke="#d0d0d0" stroke-width="1"/>
<line x1="158.6" x2="510.4" y1="388.5" y2="388.5" stroke="#ebebeb" stroke-width="1"/>
<line x1="152" x2="156" y1="388.5" y2="388.5" stroke="#d0d0d0" stroke-width="1"/>
<line x1="158.6" x2="510.4" y1="382.5" y2="382.5" stroke="#ebebeb" stroke-width="1"/>
<line x1="152" x2="156" y1="382.5" y2="382.5" stroke="#d0d0d0" stroke-width="1"/>
<line x1="158.6" x2="510.4" y1="376.5" y2="376.5" stroke="#ebebeb" stroke-width="1"/>
<line x1="152" x2="156" y1="376.5" y2="376.5" stroke="#d0d0d0" stroke-width="1"/>
<line x1="158.6" x2="510.4" y1="364.5" y2="364.5" stroke="#ebebeb" stroke-width="1"/>
<line x1="152" x2="156" y1="364.5" y2="364.5" stroke="#d0d0d0" stroke-width="1"/>
<line x1="158.6" x2="510.4" y1="358.5" y2="358.5" stroke="#ebebeb" stroke-width="1"/>
<line x1="152" x2="156" y1="358.5" y2="358.5" stroke="#d0d0d0" stroke-width="1"/>
<line x1="158.6" x2="510.4" y1="352.5" y2="352.5" stroke="#ebebeb" stroke-width="1"/>
<line x1="152" x2="156" y1="352.5" y2="352.5" stroke="#d0d0d0" stroke-width="1"/>
<line x1="158.6" x2="510.4" y1="346.5" y2="346.5" stroke="#ebebeb" stroke-width="1"/>
<line x1="152" x2="156" y1="346.5" y2="346.5" stroke="#d0d0d0" stroke-width="1"/>
<line x1="158.6" x2="510.4" y1="334.5" y2="334.5" stroke="#ebebeb" stroke-width="1"/>
<line x1="152" x2="156" y1="334.5" y2="334.5" stroke="#d0d0d0" stroke-width="1"/>
<line x1="158.6" x2="510.4" y1="328.5" y2="328.5" stroke="#ebebeb" stroke-width="1"/>
<line x1="152" x2="156" y1="328.5" y2="328.5" stroke="#d0d0d0" stroke-width="1"/>
<line x1="158.6" x2="510.4" y1="322.5" y2="322.5" stroke="#ebebeb" stroke-width="1"/>
<line x1="152" x2="156" y1="322.5" y2="322.5" stroke="#d0d0d0" stroke-width="1"/>
<line x1="158.6" x2="510.4" y1="316.5" y2="316.5" stroke="#ebebeb" stroke-width="1"/>
<line x1="152" x2="156" y1="316.5" y2="316.5" stroke="#d0d0d0" stroke-width="1"/>
<line x1="158.6" x2="510.4" y1="304.5" y2="304.5" stroke="#ebebeb" stroke-width="1"/>
<line x1="152" x2="156" y1="304.5" y2="304.5" stroke="#d0d0d0" stroke-width="1"/>
<line x1="171.5" x2="171.5" y1="304.0" y2="430.0" stroke="#ebebeb" stroke-width="1"/>
<line x1="171.5" x2="171.5" y1="432" y2="434.5" stroke="#d0d0d0" stroke-width="1"/>
<line x1="185.5" x2="185.5" y1="304.0" y2="430.0" stroke="#ebebeb" stroke-width="1"/>
<line x1="185.5" x2="185.5" y1="432" y2="434.5" stroke="#d0d0d0" stroke-width="1"/>
<line x1="198.5" x2="198.5" y1="304.0" y2="430.0" stroke="#ebebeb" stroke-width="1"/>
<line x1="198.5" x2="198.5" y1="432" y2="434.5" stroke="#d0d0d0" stroke-width="1"/>
<line x1="211.5" x2="211.5" y1="304.0" y2="430.0" stroke="#ebebeb" stroke-width="1"/>
<line x1="211.5" x2="211.5" y1="432" y2="434.5" stroke="#d0d0d0" stroke-width="1"/>
<line x1="238.5" x2="238.5" y1="304.0" y2="430.0" stroke="#ebebeb" stroke-width="1"/>
<line x1="238.5" x2="238.5" y1="432" y2="434.5" stroke="#d0d0d0" stroke-width="1"/>
<line x1="251.5" x2="251.5" y1="304.0" y2="430.0" stroke="#ebebeb" stroke-width="1"/>
<line x1="251.5" x2="251.5" y1="432" y2="434.5" stroke="#d0d0d0" stroke-width="1"/>
<line x1="265.5" x2="265.5" y1="304.0" y2="430.0" stroke="#ebebeb" stroke-width="1"/>
<line x1="265.5" x2="265.5" y1="432" y2="434.5" stroke="#d0d0d0" stroke-width="1"/>
<line x1="278.5" x2="278.5" y1="304.0" y2="430.0" stroke="#ebebeb" stroke-width="1"/>
<line x1="278.5" x2="278.5" y1="432" y2="434.5" stroke="#d0d0d0" stroke-width="1"/>
<line x1="304.5" x2="304.5" y1="304.0" y2="430.0" stroke="#ebebeb" stroke-width="1"/>
<line x1="304.5" x2="304.5" y1="432" y2="434.5" stroke="#d0d0d0" stroke-width="1"/>
<line x1="318.5" x2="318.5" y1="304.0" y2="430.0" stroke="#ebebeb" stroke-width="1"/>
<line x1="318.5" x2="318.5" y1="432" y2="434.5" stroke="#d0d0d0" stroke-width="1"/>
<line x1="331.5" x2="331.5" y1="304.0" y2="430.0" stroke="#ebebeb" stroke-width="1"/>
<line x1="331.5" x2="331.5" y1="432" y2="434.5" stroke="#d0d0d0" stroke-width="1"/>
<line x1="344.5" x2="344.5" y1="304.0" y2="430.0" stroke="#ebebeb" stroke-width="1"/>
<line x1="344.5" x2="344.5" y1="432" y2="434.5" stroke="#d0d0d0" stroke-width="1"/>
<line x1="371.5" x2="371.5" y1="304.0" y2="430.0" stroke="#ebebeb" stroke-width="1"/>
<line x1="371.5" x2="371.5" y1="432" y2="434.5" stroke="#d0d0d0" stroke-width="1"/>
<line x1="384.5" x2="384.5" y1="304.0" y2="430.0" stroke="#ebebeb" stroke-width="1"/>
<line x1="384.5" x2="384.5" y1="432" y2="434.5" stroke="#d0d0d0" stroke-width="1"/>
<line x1="398.5" x2="398.5" y1="304.0" y2="430.0" stroke="#ebebeb" stroke-width="1"/>
<line x1="398.5" x2="398.5" y1="432" y2="434.5" stroke="#d0d0d0" stroke-width="1"/>
<line x1="411.5" x2="411.5" y1="304.0" y2="430.0" stroke="#ebebeb" stroke-width="1"/>
<line x1="411.5" x2="411.5" y1="432" y2="434.5" stroke="#d0d0d0" stroke-width="1"/>
<line x1="437.5" x2="437.5" y1="304.0" y2="430.0" stroke="#ebebeb" stroke-width="1"/>
<line x1="437.5" x2="437.5" y1="432" y2="434.5" stroke="#d0d0d0" stroke-width="1"/>
<line x1="451.5" x2="451.5" y1="304.0" y2="430.0" stroke="#ebebeb" stroke-width="1"/>
<line x1="451.5" x2="451.5" y1="432" y2="434.5" stroke="#d0d0d0" stroke-width="1"/>
<line x1="464.5" x2="464.5" y1="304.0" y2="430.0" stroke="#ebebeb" stroke-width="1"/>
<line x1="464.5" x2="464.5" y1="432" y2="434.5" stroke="#d0d0d0" stroke-width="1"/>
<line x1="477.5" x2="477.5" y1="304.0" y2="430.0" stroke="#ebebeb" stroke-width="1"/>
<line x1="477.5" x2="477.5" y1="432" y2="434.5" stroke="#d0d0d0" stroke-width="1"/>
<line x1="504.5" x2="504.5" y1="304.0" y2="430.0" stroke="#ebebeb" stroke-width="1"/>
<line x1="504.5" x2="504.5" y1="432" y2="434.5" stroke="#d0d0d0" stroke-width="1"/>
<line x1="158.5" x2="158.5" y1="432" y2="437" stroke="#a0a0a0" stroke-width="1"/>
<text x="159.0" y="443.8" text-anchor="middle" font-family="Liberation Sans" font-weight="bold" font-size="6.5" fill="#111">0</text>
<line x1="225.5" x2="225.5" y1="304.0" y2="430.0" stroke="#a8a8a8" stroke-width="1"/>
<line x1="225.5" x2="225.5" y1="432" y2="437" stroke="#a0a0a0" stroke-width="1"/>
<text x="225.5" y="443.8" text-anchor="middle" font-family="Liberation Sans" font-weight="bold" font-size="6.5" fill="#111">2</text>
<line x1="291.5" x2="291.5" y1="304.0" y2="430.0" stroke="#a8a8a8" stroke-width="1"/>
<line x1="291.5" x2="291.5" y1="432" y2="437" stroke="#a0a0a0" stroke-width="1"/>
<text x="292.0" y="443.8" text-anchor="middle" font-family="Liberation Sans" font-weight="bold" font-size="6.5" fill="#111">4</text>
<line x1="358.5" x2="358.5" y1="304.0" y2="430.0" stroke="#a8a8a8" stroke-width="1"/>
<line x1="358.5" x2="358.5" y1="432" y2="437" stroke="#a0a0a0" stroke-width="1"/>
<text x="358.6" y="443.8" text-anchor="middle" font-family="Liberation Sans" font-weight="bold" font-size="6.5" fill="#111">6</text>
<line x1="424.5" x2="424.5" y1="304.0" y2="430.0" stroke="#a8a8a8" stroke-width="1"/>
<line x1="424.5" x2="424.5" y1="432" y2="437" stroke="#a0a0a0" stroke-width="1"/>
<text x="425.1" y="443.8" text-anchor="middle" font-family="Liberation Sans" font-weight="bold" font-size="6.5" fill="#111">8</text>
<line x1="491.5" x2="491.5" y1="304.0" y2="430.0" stroke="#a8a8a8" stroke-width="1"/>
<line x1="491.5" x2="491.5" y1="432" y2="437" stroke="#a0a0a0" stroke-width="1"/>
<text x="491.6" y="443.8" text-anchor="middle" font-family="Liberation Sans" font-weight="bold" font-size="6.5" fill="#111">10</text>
<line x1="158.6" x2="510.4" y1="310.5" y2="310.5" stroke="#a8a8a8" stroke-width="1"/>
<line x1="149" x2="156" y1="310.5" y2="310.5" stroke="#a0a0a0" stroke-width="1"/>
<text x="147.5" y="313.0" text-anchor="end" font-family="Liberation Sans" font-weight="bold" font-size="6.5" fill="#111">0.225</text>
<line x1="158.6" x2="510.4" y1="340.5" y2="340.5" stroke="#a8a8a8" stroke-width="1"/>
<line x1="149" x2="156" y1="340.5" y2="340.5" stroke="#a0a0a0" stroke-width="1"/>
<text x="147.5" y="342.9" text-anchor="end" font-family="Liberation Sans" font-weight="bold" font-size="6.5" fill="#111">0.200</text>
<line x1="158.6" x2="510.4" y1="370.5" y2="370.5" stroke="#a8a8a8" stroke-width="1"/>
<line x1="149" x2="156" y1="370.5" y2="370.5" stroke="#a0a0a0" stroke-width="1"/>
<text x="147.5" y="372.9" text-anchor="end" font-family="Liberation Sans" font-weight="bold" font-size="6.5" fill="#111">0.175</text>
<line x1="158.6" x2="510.4" y1="400.5" y2="400.5" stroke="#a8a8a8" stroke-width="1"/>
<line x1="149" x2="156" y1="400.5" y2="400.5" stroke="#a0a0a0" stroke-width="1"/>
<text x="147.5" y="402.8" text-anchor="end" font-family="Liberation Sans" font-weight="bold" font-size="6.5" fill="#111">0.150</text>
<line x1="149" x2="156" y1="430.5" y2="430.5" stroke="#a0a0a0" stroke-width="1"/>
<text x="147.5" y="428.1" text-anchor="end" font-family="Liberation Sans" font-weight="bold" font-size="6.5" fill="#111">0.125</text>
<line x1="156.3" x2="510.4" y1="430.0" y2="430.0" stroke="#000" stroke-width="1.6"/>
<line x1="158.6" x2="158.6" y1="304.0" y2="430.0" stroke="#000" stroke-width="1.6"/>
<line x1="510.4" x2="510.4" y1="304.0" y2="430.0" stroke="#000" stroke-width="1.2"/>
<text transform="translate(116,367) rotate(-90)" text-anchor="middle" font-family="Liberation Sans" font-weight="bold" font-size="6.5" fill="#111">Poloha [m]</text>
<text x="333" y="454.5" text-anchor="middle" font-family="Liberation Sans" font-weight="bold" font-size="6.5" fill="#111">Čas [s]</text>
<clipPath id="mcpb"><rect x="158.6" y="302.0" width="351.79999999999995" height="128.0"/></clipPath>
<g clip-path="url(#mcpb)">
<polyline fill="none" stroke="#ff80ff" stroke-width="1" points="158.6,316.6 159.3,320.1 159.9,324.4 160.6,329.4 161.3,335.0 161.9,341.2 162.6,347.9 163.3,354.9 163.9,362.1 164.6,369.5 165.3,376.8 165.9,384.0 166.6,391.0 167.2,397.7 167.9,403.8 168.6,409.5 169.2,414.5 169.9,418.7 170.6,422.2 171.2,424.9 171.9,426.6 172.6,427.5 173.2,427.4 173.9,426.3 174.6,424.4 175.2,421.6 175.9,417.9 176.6,413.5 177.2,408.4 177.9,402.6 178.6,396.3 179.2,389.6 179.9,382.6 180.6,375.3 181.2,368.0 181.9,360.6 182.5,353.5 183.2,346.5 183.9,339.9 184.5,333.8 185.2,328.3 185.9,323.4 186.5,319.3 187.2,316.0 187.9,313.5 188.5,311.9 189.2,311.2 189.9,311.5 190.5,312.6 191.2,314.7 191.9,317.7 192.5,321.5 193.2,326.0 193.9,331.3 194.5,337.1 195.2,343.5 195.9,350.3 196.5,357.4 197.2,364.7 197.8,372.0 198.5,379.3 199.2,386.5 199.8,393.4 200.5,399.9 201.2,405.9 201.8,411.3 202.5,416.0 203.2,420.0 203.8,423.2 204.5,425.6 205.2,427.0 205.8,427.5 206.5,427.1 207.2,425.8 207.8,423.5 208.5,420.4 209.2,416.5 209.8,411.8 210.5,406.5 211.2,400.5 211.8,394.1 212.5,387.2 213.1,380.1 213.8,372.8 214.5,365.4 215.1,358.1 215.8,351.0 216.5,344.2 217.1,337.8 217.8,331.9 218.5,326.5 219.1,321.9 219.8,318.0 220.5,315.0 221.1,312.8 221.8,311.5 222.5,311.2 223.1,311.8 223.8,313.3 224.5,315.7 225.1,318.9 225.8,323.0 226.5,327.8 227.1,333.2 227.8,339.3 228.4,345.8 229.1,352.7 229.8,359.9 230.4,367.2 231.1,374.6 231.8,381.8 232.4,388.9 233.1,395.7 233.8,402.0 234.4,407.8 235.1,413.0 235.8,417.5 236.4,421.2 237.1,424.1 237.8,426.2 238.4,427.3 239.1,427.5 239.8,426.7 240.4,425.1 241.1,422.5 241.8,419.1 242.4,415.0 243.1,410.0 243.7,404.5 244.4,398.3 245.1,391.7 245.7,384.8 246.4,377.6 247.1,370.2 247.7,362.9 248.4,355.6 249.1,348.6 249.7,341.9 250.4,335.7 251.1,330.0 251.7,324.9 252.4,320.5 253.1,316.9 253.7,314.1 254.4,312.3 255.1,311.3 255.7,311.3 256.4,312.2 257.0,314.0 257.7,316.7 258.4,320.2 259.0,324.6 259.7,329.6 260.4,335.3 261.0,341.5 261.7,348.2 262.4,355.2 263.0,362.4 263.7,369.7 264.4,377.1 265.0,384.3 265.7,391.3 266.4,397.9 267.0,404.1 267.7,409.7 268.4,414.7 269.0,418.9 269.7,422.3 270.4,425.0 271.0,426.7 271.7,427.5 272.3,427.3 273.0,426.3 273.7,424.3 274.3,421.5 275.0,417.8 275.7,413.3 276.3,408.2 277.0,402.4 277.7,396.1 278.3,389.4 279.0,382.3 279.7,375.0 280.3,367.7 281.0,360.4 281.7,353.2 282.3,346.3 283.0,339.7 283.7,333.6 284.3,328.1 285.0,323.3 285.7,319.2 286.3,315.8 287.0,313.4 287.6,311.8 288.3,311.2 289.0,311.5 289.6,312.7 290.3,314.8 291.0,317.8 291.6,321.6 292.3,326.2 293.0,331.5 293.6,337.4 294.3,343.8 295.0,350.6 295.6,357.7 296.3,364.9 297.0,372.3 297.6,379.6 298.3,386.7 299.0,393.6 299.6,400.1 300.3,406.1 301.0,411.5 301.6,416.2 302.3,420.2 302.9,423.3 303.6,425.6 304.3,427.0 304.9,427.5 305.6,427.1 306.3,425.7 306.9,423.4 307.6,420.3 308.3,416.3 308.9,411.6 309.6,406.2 310.3,400.3 310.9,393.8 311.6,386.9 312.3,379.8 312.9,372.5 313.6,365.1 314.3,357.9 314.9,350.7 315.6,343.9 316.3,337.5 316.9,331.6 317.6,326.4 318.2,321.8 318.9,317.9 319.6,314.9 320.2,312.7 320.9,311.5 321.6,311.2 322.2,311.8 322.9,313.3 323.6,315.8 324.2,319.1 324.9,323.1 325.6,328.0 326.2,333.5 326.9,339.5 327.6,346.1 328.2,353.0 328.9,360.2 329.6,367.5 330.2,374.8 330.9,382.1 331.6,389.2 332.2,395.9 332.9,402.2 333.5,408.0 334.2,413.2 334.9,417.7 335.5,421.4 336.2,424.2 336.9,426.2 337.5,427.3 338.2,427.5 338.9,426.7 339.5,425.0 340.2,422.4 340.9,419.0 341.5,414.8 342.2,409.8 342.9,404.2 343.5,398.1 344.2,391.5 344.9,384.5 345.5,377.3 346.2,369.9 346.9,362.6 347.5,355.4 348.2,348.3 348.8,341.7 349.5,335.4 350.2,329.7 350.8,324.7 351.5,320.3 352.2,316.8 352.8,314.1 353.5,312.2 354.2,311.3 354.8,311.3 355.5,312.2 356.2,314.1 356.8,316.8 357.5,320.4 358.2,324.7 358.8,329.8 359.5,335.5 360.2,341.7 360.8,348.4 361.5,355.4 362.2,362.7 362.8,370.0 363.5,377.4 364.1,384.6 364.8,391.5 365.5,398.1 366.1,404.3 366.8,409.9 367.5,414.8 368.1,419.0 368.8,422.5 369.5,425.0 370.1,426.7 370.8,427.5 371.5,427.3 372.1,426.2 372.8,424.2 373.5,421.3 374.1,417.6 374.8,413.1 375.5,408.0 376.1,402.2 376.8,395.8 377.5,389.1 378.1,382.0 378.8,374.8 379.4,367.4 380.1,360.1 380.8,352.9 381.4,346.0 382.1,339.5 382.8,333.4 383.4,327.9 384.1,323.1 384.8,319.0 385.4,315.7 386.1,313.3 386.8,311.8 387.4,311.2 388.1,311.5 388.8,312.8 389.4,314.9 390.1,318.0 390.8,321.8 391.4,326.4 392.1,331.7 392.8,337.6 393.4,344.0 394.1,350.8 394.7,357.9 395.4,365.2 396.1,372.6 396.7,379.9 397.4,387.0 398.1,393.9 398.7,400.3 399.4,406.3 400.1,411.7 400.7,416.4 401.4,420.3 402.1,423.5 402.7,425.7 403.4,427.1 404.1,427.5 404.7,427.0 405.4,425.6 406.1,423.3 406.7,420.1 407.4,416.2 408.0,411.4 408.7,406.0 409.4,400.0 410.0,393.5 410.7,386.7 411.4,379.5 412.0,372.2 412.7,364.9 413.4,357.6 414.0,350.5 414.7,343.7 415.4,337.3 416.0,331.4 416.7,326.2 417.4,321.6 418.0,317.8 418.7,314.8 419.4,312.7 420.0,311.5 420.7,311.2 421.4,311.8 422.0,313.4 422.7,315.9 423.3,319.2 424.0,323.3 424.7,328.2 425.3,333.7 426.0,339.8 426.7,346.3 427.3,353.3 428.0,360.4 428.7,367.8 429.3,375.1 430.0,382.4 430.7,389.4 431.3,396.2 432.0,402.5 432.7,408.2 433.3,413.4 434.0,417.8 434.7,421.5 435.3,424.3 436.0,426.3 436.7,427.3 437.3,427.5 438.0,426.7 438.6,424.9 439.3,422.3 440.0,418.9 440.6,414.6 441.3,409.6 442.0,404.0 442.6,397.8 443.3,391.2 444.0,384.2 444.6,377.0 445.3,369.7 446.0,362.3 446.6,355.1 447.3,348.1 448.0,341.4 448.6,335.2 449.3,329.5 450.0,324.5 450.6,320.2 451.3,316.7 452.0,314.0 452.6,312.2 453.3,311.3 453.9,311.3 454.6,312.3 455.3,314.2 455.9,316.9 456.6,320.5 457.3,324.9 457.9,330.0 458.6,335.7 459.3,342.0 459.9,348.7 460.6,355.7 461.3,363.0 461.9,370.3 462.6,377.7 463.3,384.9 463.9,391.8 464.6,398.4 465.3,404.5 465.9,410.1 466.6,415.0 467.3,419.2 467.9,422.6 468.6,425.1 469.2,426.8 469.9,427.5 470.6,427.3 471.2,426.2 471.9,424.1 472.6,421.2 473.2,417.5 473.9,413.0 474.6,407.7 475.2,401.9 475.9,395.6 476.6,388.8 477.2,381.7 477.9,374.5 478.6,367.1 479.2,359.8 479.9,352.6 480.6,345.7 481.2,339.2 481.9,333.2 482.6,327.7 483.2,322.9 483.9,318.9 484.5,315.6 485.2,313.2 485.9,311.8 486.5,311.2 487.2,311.5 487.9,312.8 488.5,315.0 489.2,318.1 489.9,322.0 490.5,326.6 491.2,331.9 491.9,337.8 492.5,344.3 493.2,351.1 493.9,358.2 494.5,365.5 495.2,372.9 495.9,380.2 496.5,387.3 497.2,394.1 497.9,400.6 498.5,406.5 499.2,411.9 499.8,416.5 500.5,420.5 501.2,423.6 501.8,425.8 502.5,427.1 503.2,427.5 503.8,427.0 504.5,425.6 505.2,423.2 505.8,420.0 506.5,416.0 507.2,411.2 507.8,405.8 508.5,399.8 509.2,393.3 509.8,386.4 510.5,379.2 511.2,371.9 511.8,364.6"/>
<polyline fill="none" stroke="#ff40ff" stroke-width="1.15" points="158.6,316.4 160.3,327.2 161.9,339.4 163.6,359.7 165.3,374.1 166.9,395.8 168.6,408.0 170.2,421.7 171.9,424.3 173.6,426.8 175.2,421.0 176.9,410.0 178.6,397.3 180.2,380.5 181.9,363.6 183.5,341.4 185.2,329.3 186.9,318.4 188.5,311.9 190.2,309.1 191.9,320.2 193.5,328.2 195.2,344.1 196.8,360.2 198.5,381.9 200.2,397.2 201.8,410.1 203.5,419.5 205.2,424.7 206.8,427.8 208.5,420.3 210.2,409.4 211.8,396.0 213.5,378.5 215.1,357.0 216.8,340.6 218.5,326.8 220.1,314.7 221.8,313.0 223.5,311.6 225.1,318.9 226.8,330.5 228.4,345.1 230.1,363.3 231.8,381.4 233.4,398.5 235.1,410.2 236.8,423.3 238.4,425.8 240.1,425.2 241.7,419.7 243.4,406.2 245.1,393.0 246.7,372.2 248.4,356.8 250.1,339.4 251.7,324.4 253.4,314.2 255.1,310.0 256.7,311.7 258.4,320.5 260.0,333.7 261.7,347.4 263.4,365.6 265.0,385.7 266.7,399.7 268.4,414.4 270.0,425.1 271.7,426.8 273.3,427.3 275.0,419.0 276.7,404.8 278.3,391.6 280.0,371.3 281.7,355.1 283.3,335.5 285.0,324.3 286.7,314.2 288.3,313.4 290.0,314.1 291.6,320.3 293.3,333.7 295.0,353.2 296.6,367.3 298.3,385.5 300.0,403.7 301.6,414.2 303.3,426.1 304.9,427.6 306.6,423.1 308.3,414.4 309.9,401.5 311.6,388.5 313.3,371.4 314.9,350.2 316.6,336.6 318.2,321.9 319.9,315.6 321.6,309.7 323.2,313.3 324.9,322.3 326.6,336.4 328.2,352.9 329.9,371.6 331.6,388.6 333.2,404.8 334.9,417.0 336.5,426.0 338.2,424.7 339.9,423.4 341.5,412.8 343.2,399.3 344.9,385.8 346.5,368.7 348.2,346.5 349.8,333.1 351.5,320.2 353.2,313.4 354.8,311.1 356.5,317.0 358.2,324.9 359.8,339.2 361.5,355.5 363.1,377.1 364.8,390.4 366.5,406.7 368.1,421.5 369.8,427.0 371.5,427.3 373.1,422.0 374.8,413.1 376.5,397.1 378.1,382.0 379.8,365.2 381.4,347.0 383.1,329.5 384.8,319.9 386.4,311.2 388.1,310.1 389.8,315.5 391.4,325.0 393.1,341.0 394.7,357.9 396.4,377.1 398.1,394.8 399.7,411.3 401.4,421.1 403.1,428.1 404.7,429.1 406.4,421.6 408.0,410.8 409.7,397.3 411.4,377.6 413.0,359.8 414.7,342.2 416.4,329.6 418.0,319.9 419.7,311.2 421.4,311.4 423.0,316.4 424.7,327.6 426.3,341.2 428.0,360.9 429.7,377.8 431.3,397.4 433.0,414.2 434.7,422.1 436.3,424.8 438.0,429.1 439.6,419.2 441.3,410.6 443.0,395.1 444.6,376.9 446.3,358.4 448.0,342.8 449.6,326.8 451.3,316.0 453.0,310.4 454.6,313.4 456.3,316.4 457.9,327.3 459.6,341.8 461.3,364.9 462.9,381.0 464.6,401.1 466.3,412.1 467.9,421.8 469.6,428.9 471.2,428.4 472.9,419.2 474.6,406.8 476.2,393.4 477.9,374.8 479.6,359.8 481.2,340.2 482.9,325.0 484.5,315.4 486.2,309.1 487.9,314.5 489.5,323.2 491.2,331.3 492.9,348.5"/>
<g fill="#ff22ff"><circle cx="158.6" cy="316.4" r="1.75"/><circle cx="160.3" cy="327.2" r="1.75"/><circle cx="161.9" cy="339.4" r="1.75"/><circle cx="163.6" cy="359.7" r="1.75"/><circle cx="165.3" cy="374.1" r="1.75"/><circle cx="166.9" cy="395.8" r="1.75"/><circle cx="168.6" cy="408.0" r="1.75"/><circle cx="170.2" cy="421.7" r="1.75"/><circle cx="171.9" cy="424.3" r="1.75"/><circle cx="173.6" cy="426.8" r="1.75"/><circle cx="175.2" cy="421.0" r="1.75"/><circle cx="176.9" cy="410.0" r="1.75"/><circle cx="178.6" cy="397.3" r="1.75"/><circle cx="180.2" cy="380.5" r="1.75"/><circle cx="181.9" cy="363.6" r="1.75"/><circle cx="183.5" cy="341.4" r="1.75"/><circle cx="185.2" cy="329.3" r="1.75"/><circle cx="186.9" cy="318.4" r="1.75"/><circle cx="188.5" cy="311.9" r="1.75"/><circle cx="190.2" cy="309.1" r="1.75"/><circle cx="191.9" cy="320.2" r="1.75"/><circle cx="193.5" cy="328.2" r="1.75"/><circle cx="195.2" cy="344.1" r="1.75"/><circle cx="196.8" cy="360.2" r="1.75"/><circle cx="198.5" cy="381.9" r="1.75"/><circle cx="200.2" cy="397.2" r="1.75"/><circle cx="201.8" cy="410.1" r="1.75"/><circle cx="203.5" cy="419.5" r="1.75"/><circle cx="205.2" cy="424.7" r="1.75"/><circle cx="206.8" cy="427.8" r="1.75"/><circle cx="208.5" cy="420.3" r="1.75"/><circle cx="210.2" cy="409.4" r="1.75"/><circle cx="211.8" cy="396.0" r="1.75"/><circle cx="213.5" cy="378.5" r="1.75"/><circle cx="215.1" cy="357.0" r="1.75"/><circle cx="216.8" cy="340.6" r="1.75"/><circle cx="218.5" cy="326.8" r="1.75"/><circle cx="220.1" cy="314.7" r="1.75"/><circle cx="221.8" cy="313.0" r="1.75"/><circle cx="223.5" cy="311.6" r="1.75"/><circle cx="225.1" cy="318.9" r="1.75"/><circle cx="226.8" cy="330.5" r="1.75"/><circle cx="228.4" cy="345.1" r="1.75"/><circle cx="230.1" cy="363.3" r="1.75"/><circle cx="231.8" cy="381.4" r="1.75"/><circle cx="233.4" cy="398.5" r="1.75"/><circle cx="235.1" cy="410.2" r="1.75"/><circle cx="236.8" cy="423.3" r="1.75"/><circle cx="238.4" cy="425.8" r="1.75"/><circle cx="240.1" cy="425.2" r="1.75"/><circle cx="241.7" cy="419.7" r="1.75"/><circle cx="243.4" cy="406.2" r="1.75"/><circle cx="245.1" cy="393.0" r="1.75"/><circle cx="246.7" cy="372.2" r="1.75"/><circle cx="248.4" cy="356.8" r="1.75"/><circle cx="250.1" cy="339.4" r="1.75"/><circle cx="251.7" cy="324.4" r="1.75"/><circle cx="253.4" cy="314.2" r="1.75"/><circle cx="255.1" cy="310.0" r="1.75"/><circle cx="256.7" cy="311.7" r="1.75"/><circle cx="258.4" cy="320.5" r="1.75"/><circle cx="260.0" cy="333.7" r="1.75"/><circle cx="261.7" cy="347.4" r="1.75"/><circle cx="263.4" cy="365.6" r="1.75"/><circle cx="265.0" cy="385.7" r="1.75"/><circle cx="266.7" cy="399.7" r="1.75"/><circle cx="268.4" cy="414.4" r="1.75"/><circle cx="270.0" cy="425.1" r="1.75"/><circle cx="271.7" cy="426.8" r="1.75"/><circle cx="273.3" cy="427.3" r="1.75"/><circle cx="275.0" cy="419.0" r="1.75"/><circle cx="276.7" cy="404.8" r="1.75"/><circle cx="278.3" cy="391.6" r="1.75"/><circle cx="280.0" cy="371.3" r="1.75"/><circle cx="281.7" cy="355.1" r="1.75"/><circle cx="283.3" cy="335.5" r="1.75"/><circle cx="285.0" cy="324.3" r="1.75"/><circle cx="286.7" cy="314.2" r="1.75"/><circle cx="288.3" cy="313.4" r="1.75"/><circle cx="290.0" cy="314.1" r="1.75"/><circle cx="291.6" cy="320.3" r="1.75"/><circle cx="293.3" cy="333.7" r="1.75"/><circle cx="295.0" cy="353.2" r="1.75"/><circle cx="296.6" cy="367.3" r="1.75"/><circle cx="298.3" cy="385.5" r="1.75"/><circle cx="300.0" cy="403.7" r="1.75"/><circle cx="301.6" cy="414.2" r="1.75"/><circle cx="303.3" cy="426.1" r="1.75"/><circle cx="304.9" cy="427.6" r="1.75"/><circle cx="306.6" cy="423.1" r="1.75"/><circle cx="308.3" cy="414.4" r="1.75"/><circle cx="309.9" cy="401.5" r="1.75"/><circle cx="311.6" cy="388.5" r="1.75"/><circle cx="313.3" cy="371.4" r="1.75"/><circle cx="314.9" cy="350.2" r="1.75"/><circle cx="316.6" cy="336.6" r="1.75"/><circle cx="318.2" cy="321.9" r="1.75"/><circle cx="319.9" cy="315.6" r="1.75"/><circle cx="321.6" cy="309.7" r="1.75"/><circle cx="323.2" cy="313.3" r="1.75"/><circle cx="324.9" cy="322.3" r="1.75"/><circle cx="326.6" cy="336.4" r="1.75"/><circle cx="328.2" cy="352.9" r="1.75"/><circle cx="329.9" cy="371.6" r="1.75"/><circle cx="331.6" cy="388.6" r="1.75"/><circle cx="333.2" cy="404.8" r="1.75"/><circle cx="334.9" cy="417.0" r="1.75"/><circle cx="336.5" cy="426.0" r="1.75"/><circle cx="338.2" cy="424.7" r="1.75"/><circle cx="339.9" cy="423.4" r="1.75"/><circle cx="341.5" cy="412.8" r="1.75"/><circle cx="343.2" cy="399.3" r="1.75"/><circle cx="344.9" cy="385.8" r="1.75"/><circle cx="346.5" cy="368.7" r="1.75"/><circle cx="348.2" cy="346.5" r="1.75"/><circle cx="349.8" cy="333.1" r="1.75"/><circle cx="351.5" cy="320.2" r="1.75"/><circle cx="353.2" cy="313.4" r="1.75"/><circle cx="354.8" cy="311.1" r="1.75"/><circle cx="356.5" cy="317.0" r="1.75"/><circle cx="358.2" cy="324.9" r="1.75"/><circle cx="359.8" cy="339.2" r="1.75"/><circle cx="361.5" cy="355.5" r="1.75"/><circle cx="363.1" cy="377.1" r="1.75"/><circle cx="364.8" cy="390.4" r="1.75"/><circle cx="366.5" cy="406.7" r="1.75"/><circle cx="368.1" cy="421.5" r="1.75"/><circle cx="369.8" cy="427.0" r="1.75"/><circle cx="371.5" cy="427.3" r="1.75"/><circle cx="373.1" cy="422.0" r="1.75"/><circle cx="374.8" cy="413.1" r="1.75"/><circle cx="376.5" cy="397.1" r="1.75"/><circle cx="378.1" cy="382.0" r="1.75"/><circle cx="379.8" cy="365.2" r="1.75"/><circle cx="381.4" cy="347.0" r="1.75"/><circle cx="383.1" cy="329.5" r="1.75"/><circle cx="384.8" cy="319.9" r="1.75"/><circle cx="386.4" cy="311.2" r="1.75"/><circle cx="388.1" cy="310.1" r="1.75"/><circle cx="389.8" cy="315.5" r="1.75"/><circle cx="391.4" cy="325.0" r="1.75"/><circle cx="393.1" cy="341.0" r="1.75"/><circle cx="394.7" cy="357.9" r="1.75"/><circle cx="396.4" cy="377.1" r="1.75"/><circle cx="398.1" cy="394.8" r="1.75"/><circle cx="399.7" cy="411.3" r="1.75"/><circle cx="401.4" cy="421.1" r="1.75"/><circle cx="403.1" cy="428.1" r="1.75"/><circle cx="404.7" cy="429.1" r="1.75"/><circle cx="406.4" cy="421.6" r="1.75"/><circle cx="408.0" cy="410.8" r="1.75"/><circle cx="409.7" cy="397.3" r="1.75"/><circle cx="411.4" cy="377.6" r="1.75"/><circle cx="413.0" cy="359.8" r="1.75"/><circle cx="414.7" cy="342.2" r="1.75"/><circle cx="416.4" cy="329.6" r="1.75"/><circle cx="418.0" cy="319.9" r="1.75"/><circle cx="419.7" cy="311.2" r="1.75"/><circle cx="421.4" cy="311.4" r="1.75"/><circle cx="423.0" cy="316.4" r="1.75"/><circle cx="424.7" cy="327.6" r="1.75"/><circle cx="426.3" cy="341.2" r="1.75"/><circle cx="428.0" cy="360.9" r="1.75"/><circle cx="429.7" cy="377.8" r="1.75"/><circle cx="431.3" cy="397.4" r="1.75"/><circle cx="433.0" cy="414.2" r="1.75"/><circle cx="434.7" cy="422.1" r="1.75"/><circle cx="436.3" cy="424.8" r="1.75"/><circle cx="438.0" cy="429.1" r="1.75"/><circle cx="439.6" cy="419.2" r="1.75"/><circle cx="441.3" cy="410.6" r="1.75"/><circle cx="443.0" cy="395.1" r="1.75"/><circle cx="444.6" cy="376.9" r="1.75"/><circle cx="446.3" cy="358.4" r="1.75"/><circle cx="448.0" cy="342.8" r="1.75"/><circle cx="449.6" cy="326.8" r="1.75"/><circle cx="451.3" cy="316.0" r="1.75"/><circle cx="453.0" cy="310.4" r="1.75"/><circle cx="454.6" cy="313.4" r="1.75"/><circle cx="456.3" cy="316.4" r="1.75"/><circle cx="457.9" cy="327.3" r="1.75"/><circle cx="459.6" cy="341.8" r="1.75"/><circle cx="461.3" cy="364.9" r="1.75"/><circle cx="462.9" cy="381.0" r="1.75"/><circle cx="464.6" cy="401.1" r="1.75"/><circle cx="466.3" cy="412.1" r="1.75"/><circle cx="467.9" cy="421.8" r="1.75"/><circle cx="469.6" cy="428.9" r="1.75"/><circle cx="471.2" cy="428.4" r="1.75"/><circle cx="472.9" cy="419.2" r="1.75"/><circle cx="474.6" cy="406.8" r="1.75"/><circle cx="476.2" cy="393.4" r="1.75"/><circle cx="477.9" cy="374.8" r="1.75"/><circle cx="479.6" cy="359.8" r="1.75"/><circle cx="481.2" cy="340.2" r="1.75"/><circle cx="482.9" cy="325.0" r="1.75"/><circle cx="484.5" cy="315.4" r="1.75"/><circle cx="486.2" cy="309.1" r="1.75"/><circle cx="487.9" cy="314.5" r="1.75"/><circle cx="489.5" cy="323.2" r="1.75"/><circle cx="491.2" cy="331.3" r="1.75"/><circle cx="492.9" cy="348.5" r="1.75"/></g>
</g>
<line x1="330" y1="372" x2="391" y2="362" stroke="#a0a0a0" stroke-width="1"/>
<rect x="390.7" y="313.6" width="85" height="82.4" fill="#fff" stroke="#ff80ff" stroke-width="1.5"/>
<g font-family="Liberation Sans" font-weight="bold" font-size="6" fill="#111" letter-spacing="0.45">
<text x="433.7" y="322.6" text-anchor="middle">Sinus</text>
<text x="433.7" y="331.4" text-anchor="middle" letter-spacing="0.5">A sin(ωt + φ) + C</text>
<line x1="403.2" x2="463.7" y1="333.9" y2="333.9" stroke="#222" stroke-width="0.9"/>
<text x="395.0" y="341.6">A</text>
<text x="405.7" y="341.6">= -0.0486</text>
<text x="437.0" y="341.6">± 2.7x10⁻⁴</text>
<text x="395.0" y="351.2">ω</text>
<text x="405.7" y="351.2">= 6.39</text>
<text x="437.0" y="351.2">± 0.0019</text>
<text x="395.0" y="360.7">φ</text>
<text x="405.7" y="360.7">= -1.20</text>
<text x="437.0" y="360.7">± 0.011</text>
<text x="395.0" y="370.2">C</text>
<text x="405.7" y="370.2">= 0.176</text>
<text x="437.0" y="370.2">± 1.9x10⁻⁴</text>
<text x="395.0" y="383.1">RMSE = 0.00267</text>
</g>
<text x="533.5" y="247.5" font-family="Liberation Sans" font-size="10" fill="#222">Podmínky měření</text>
<rect x="531.5" y="253.5" width="173" height="90.5" fill="#fff" stroke="#cfcfcf" stroke-width="1"/>
<g transform="translate(538.8,455.8) rotate(-45)" fill="none" stroke="#333" stroke-width="1.3"><rect x="-4.5" y="-1.6" width="4.6" height="3.2" rx="1.6"/><rect x="0" y="-1.6" width="4.6" height="3.2" rx="1.6"/></g>
</g></defs><use href="#chartg"/></svg>

<div class="a" style="left:93px;top:479px;width:629px;height:85px;background:#646464"></div>
<div class="a" style="left:92px;top:491px;width:534px;height:69px;background:linear-gradient(#575757,#646464 22px,#656565)"></div>
<div class="a" style="left:101px;top:495px;width:32px;height:27px;background:#4c4c4c;border:1px solid #777;border-radius:4px"></div>
<svg class="a" style="left:101px;top:495px" width="34" height="29"><circle cx="14" cy="11" r="4.5" fill="#f01818"/><circle cx="20" cy="17.5" r="4.5" fill="#f4d0d0" stroke="#e86060" stroke-width="0.8" stroke-dasharray="1 1"/></svg>
<svg class="a" style="left:108px;top:530px" width="22" height="18"><path d="M5 2 L15 7.5 L5 13 Z" fill="#30a848"/><line x1="3" y1="15.5" x2="18" y2="15.5" stroke="#ddd" stroke-width="1"/><rect x="10" y="13.5" width="2.5" height="4" fill="#bbb"/></svg>
<div class="a" style="left:137px;top:495px;width:212px;height:60px;background:linear-gradient(160deg,#676767,#5c5c5c 40%,#585858);border:1px solid #4c4c4c;border-radius:9px"></div>
<div class="a" style="left:160.3px;top:502.3px;width:20.8px;height:20.8px;border-radius:50%;border:0.8px solid #7a1a10;box-shadow:1px 1px 1.5px rgba(0,0,0,0.35);background:linear-gradient(135deg,#d83828 0%,#c83222 34%,#e08070 50%,#c83222 66%,#a8200f 100%)"></div>
<div class="a" style="left:142px;top:533px;width:60px;overflow:hidden;white-space:nowrap;font-size:10.5px;color:#f0f0f0;letter-spacing:0.25px"><span style="margin-left:-6.5px">oznamenat data</span></div>
<div class="a" style="left:209px;top:501px;width:131px;height:49px;background:#454545;border-radius:8px;border:1px solid #3c3c3c;box-sizing:border-box"></div>
<svg class="a" style="left:209px;top:501px" width="131" height="12"><defs><linearGradient id="gl" x1="0" y1="0" x2="0" y2="1"><stop offset="0" stop-color="#d8d8d8"/><stop offset="1" stop-color="#555"/></linearGradient></defs><path d="M7 7 Q12 1.2 22 1.2 H109 Q119 1.2 124 7 Q66 3.5 7 7 Z" fill="url(#gl)"/></svg>
<div class="a" style="left:228px;top:510px;font-size:20.3px;color:#e8e8e8;letter-spacing:1.65px;white-space:nowrap">00:02,00</div>
<div class="a" style="left:210px;top:536px;width:128px;height:14px;background:#2f2f2f;border-radius:3px"></div>
<div class="a" style="left:210px;top:536px;width:128px;text-align:center;font-size:10.5px;color:#eee;line-height:14px;letter-spacing:0px">Připraveno</div>
<svg class="a" style="left:439px;top:509px" width="24" height="24" viewBox="0 0 24 24"><use href="#tri" x="0" y="0.5" width="18" height="16"/><path d="M9.8 10.8 L20.5 21 M20.5 10.8 L9.8 21" stroke="#f00" stroke-width="3.3" stroke-linecap="round"/></svg>
<div class="a" style="left:373px;top:535px;font-size:10.5px;color:#f0f0f0;white-space:nowrap;letter-spacing:0.24px">Smazat poslední průběh měření</div>
<svg class="a" style="left:534px;top:522px" width="12" height="8"><path d="M1 1 H11 L6 6 Z" fill="#fff"/></svg>
<div class="a" style="left:545px;top:491px;width:81px;height:10px;background:#3a3a3a;border-bottom:1px solid #8a8a8a"></div>
<div class="a" style="left:550.5px;top:490px;font-size:10px;font-weight:bold;color:#fff;white-space:nowrap;letter-spacing:0.15px">Ovládací prvky</div>

<div class="a" style="left:725px;top:80px;width:211px;height:484px;background:#5a5a5a"></div>
<div class="a" style="left:725px;top:80px;width:210px;height:34px;background:#3c3c3c"></div>
<div class="a" style="left:725px;top:114px;width:210px;height:10px;background:linear-gradient(#3c3c3c,#303030 75%,#3a3a3a)"></div>
<div class="a" style="left:725px;top:124px;width:210px;height:3px;background:linear-gradient(#4a4a4a,#5a5a5a)"></div>
<div class="a" style="left:736px;top:94px;font-size:13.3px;font-weight:bold;color:#f4f4f4;white-space:nowrap;letter-spacing:1px">Laboratorní deník</div>
<div class="a" style="left:873px;top:92px;width:21px;height:21px;border:1px solid #8a8a8a;border-radius:4.5px;box-sizing:border-box;background:#3e3e3e"></div>
<svg class="a" style="left:868px;top:88px" width="30" height="28" viewBox="868 88 30 28"><defs><linearGradient id="pg" x1="0" y1="0" x2="1" y2="1"><stop offset="0" stop-color="#ff3030"/><stop offset="0.5" stop-color="#ffc010"/><stop offset="1" stop-color="#ff4020"/></linearGradient></defs>
<line x1="878.3" y1="109.4" x2="883.2" y2="104.6" stroke="#ff3a3a" stroke-width="1.7" stroke-linecap="round"/>
<line x1="879.6" y1="101.3" x2="886.4" y2="107.8" stroke="#ff5020" stroke-width="2.6"/>
<path d="M882.4 102.6 L887.8 96.8 L892.2 101 L886.6 106.6 Z" fill="url(#pg)"/>
<path d="M887.8 96.8 L892.2 101" stroke="#222" stroke-width="1"/>
</svg>
<svg class="a" style="left:907px;top:97px" width="11" height="11"><path d="M2 2 L9 9 M9 2 L2 9" stroke="#fff" stroke-width="2"/></svg>
<div class="a" style="left:737px;top:134px;width:188px;height:31px;background:linear-gradient(#747474,#5e5e5e 50%,#4e4e4e);border:1px solid #404040;box-sizing:border-box"></div>
<svg class="a" style="left:737px;top:134px" width="190" height="32" viewBox="737 134 190 32">
<path d="M742.3 146 Q746 144.3 749.5 145.3 V159.2 Q746 158 742.3 159.2 Z" fill="#fbecc8" stroke="#d89040" stroke-width="0.9"/>
<path d="M749.5 145.3 Q753 144.3 756.9 146 V159.2 Q753 158 749.5 159.2 Z" fill="#fbecc8" stroke="#d89040" stroke-width="0.9"/>
<rect x="744" y="147" width="2.3" height="2.3" fill="#60d8e8"/><rect x="751.5" y="147" width="2.3" height="2.3" fill="#e060e0"/><rect x="744" y="153" width="2.3" height="2.3" fill="#e060e0"/><rect x="751.5" y="153" width="2.3" height="2.3" fill="#60d8e8"/>
<rect x="753.8" y="138.8" width="9.3" height="8.9" fill="#3a78e0" stroke="#a8c8f0" stroke-width="0.8"/><rect x="756.5" y="141" width="3.5" height="3.5" fill="#fff"/>
<path d="M754 157 Q760 157 759.5 150.5" fill="none" stroke="#f0e040" stroke-width="1.8"/><path d="M756.5 151.5 L759.5 147.5 L762.5 151.5 Z" fill="#f0e040"/>
<rect x="776" y="140" width="8.5" height="5.5" fill="#fbecc8" stroke="#e8c890" stroke-width="0.5"/>
<rect x="771.5" y="144.5" width="18.7" height="8" rx="2.5" fill="url(#gprn)"/>
<rect x="776" y="152.3" width="8.5" height="4.8" fill="#fbecc8" stroke="#e8c890" stroke-width="0.5"/>
<line x1="799.6" y1="139.4" x2="799.6" y2="159.2" stroke="#d0d0d0" stroke-width="1"/>
<rect x="805.4" y="138.8" width="20.2" height="12" fill="#fff" stroke="#999" stroke-width="0.5"/>
<line x1="818.5" y1="153" x2="824.5" y2="158.5" stroke="#777" stroke-width="2.2" stroke-linecap="round"/>
<circle cx="815.2" cy="149.5" r="4.8" fill="#f8f8f8" stroke="#3a3a3a" stroke-width="1.5"/><path d="M812.5 149.5 H818 M815.2 146.8 V152.2" stroke="#3a3a3a" stroke-width="1.4"/>
<rect x="834.6" y="140" width="18.7" height="10.8" fill="#fff" stroke="#999" stroke-width="0.5"/>
<path d="M837 142 V149 H846 M838 148 L842 144 L845 146" fill="none" stroke="#555" stroke-width="0.7"/>
<path d="M843.5 145.5 L856.5 157 M856.5 145.5 L843.5 157" stroke="#8e8e8e" stroke-width="3.6"/>
<path d="M914 147.2 L917 149.5 L914 151.8 M918 147.2 L921 149.5 L918 151.8" fill="none" stroke="#111" stroke-width="1.4"/>
</svg>
<div class="a" style="left:737px;top:170px;width:1px;height:382px;background:#3a3a3a"></div>
<div class="a" style="left:737px;top:552px;width:174px;height:1px;background:#3a3a3a"></div>

<div class="a" style="left:738px;top:170px;width:169px;height:382px;overflow:hidden">
<svg class="a" style="left:0;top:0" width="169" height="382" viewBox="738 170 169 382">
<rect x="753" y="176" width="153" height="42" fill="#383838"/>
<rect x="748" y="150" width="152.5" height="63" fill="#fff"/>
<rect x="748" y="211" width="152.5" height="2" fill="#000"/>
<rect x="748" y="150" width="1" height="63" fill="#000"/>
<rect x="900" y="150" width="1" height="63" fill="#000"/>
<text x="775" y="177.6" font-family="Liberation Sans" font-weight="bold" font-size="5.2" fill="#1a1a80" textLength="43.6" lengthAdjust="spacingAndGlyphs">Mechanický oscilátor</text>
<text x="761" y="189.5" font-family="Liberation Sans" font-size="3.3" fill="#999">Doplňující údaje měření</text>
<rect x="760.5" y="192.5" width="74" height="10" fill="#fff" stroke="#e2e2e2" stroke-width="0.6"/>

<rect x="753" y="280" width="153" height="85" fill="#383838"/>
<rect x="748.5" y="275.5" width="152" height="86" fill="#fff" stroke="#000" stroke-width="1.2"/>
<text x="778" y="282.6" font-family="Liberation Sans" font-weight="bold" font-size="3.8" fill="#222" textLength="44.7" lengthAdjust="spacingAndGlyphs">Časová závislost polohy závaží</text>
<circle cx="892.7" cy="283" r="4.3" fill="#1a1a80"/><circle cx="892.7" cy="283" r="2.6" fill="#e8e8f4"/><rect x="891.6" y="280.8" width="2.2" height="4.6" fill="#1a1a80"/>
<rect x="763" y="286" width="86" height="63.6" fill="#fff" stroke="#9aa0c8" stroke-width="0.7"/>
<g stroke="#ececec" stroke-width="0.4"><line x1="763" x2="849" y1="291.3" y2="291.3"/><line x1="763" x2="849" y1="296.6" y2="296.6"/><line x1="763" x2="849" y1="301.9" y2="301.9"/><line x1="763" x2="849" y1="307.2" y2="307.2"/><line x1="763" x2="849" y1="312.5" y2="312.5"/><line x1="763" x2="849" y1="317.8" y2="317.8"/><line x1="763" x2="849" y1="323.1" y2="323.1"/><line x1="763" x2="849" y1="328.4" y2="328.4"/><line x1="763" x2="849" y1="333.7" y2="333.7"/><line x1="763" x2="849" y1="339.0" y2="339.0"/><line x1="763" x2="849" y1="344.3" y2="344.3"/><line x1="767.3" x2="767.3" y1="286" y2="349.6"/><line x1="771.6" x2="771.6" y1="286" y2="349.6"/><line x1="775.9" x2="775.9" y1="286" y2="349.6"/><line x1="780.2" x2="780.2" y1="286" y2="349.6"/><line x1="784.5" x2="784.5" y1="286" y2="349.6"/><line x1="788.8" x2="788.8" y1="286" y2="349.6"/><line x1="793.1" x2="793.1" y1="286" y2="349.6"/><line x1="797.4" x2="797.4" y1="286" y2="349.6"/><line x1="801.7" x2="801.7" y1="286" y2="349.6"/><line x1="806.0" x2="806.0" y1="286" y2="349.6"/><line x1="810.3" x2="810.3" y1="286" y2="349.6"/><line x1="814.6" x2="814.6" y1="286" y2="349.6"/><line x1="818.9" x2="818.9" y1="286" y2="349.6"/><line x1="823.2" x2="823.2" y1="286" y2="349.6"/><line x1="827.5" x2="827.5" y1="286" y2="349.6"/><line x1="831.8" x2="831.8" y1="286" y2="349.6"/><line x1="836.1" x2="836.1" y1="286" y2="349.6"/><line x1="840.4" x2="840.4" y1="286" y2="349.6"/><line x1="844.7" x2="844.7" y1="286" y2="349.6"/></g>
<line x1="764" y1="286" x2="764" y2="350" stroke="#555" stroke-width="0.6"/>
<g fill="#aaa"><rect x="757" y="289" width="3" height="0.8"/><rect x="757" y="295" width="3" height="0.8"/><rect x="757" y="300.5" width="3" height="0.8"/><rect x="757" y="306" width="3" height="0.8"/><rect x="757" y="311.5" width="3" height="0.8"/><rect x="757" y="317" width="3" height="0.8"/><rect x="757" y="322.5" width="3" height="0.8"/><rect x="757" y="328" width="3" height="0.8"/><rect x="757" y="333.5" width="3" height="0.8"/><rect x="757" y="339" width="3" height="0.8"/><rect x="757" y="344.5" width="3" height="0.8"/>
<rect x="763" y="352" width="3" height="0.8"/><rect x="784" y="352" width="3" height="0.8"/><rect x="805" y="352" width="3" height="0.8"/><rect x="826" y="352" width="3" height="0.8"/><rect x="846" y="352" width="3" height="0.8"/><rect x="802" y="355" width="5" height="0.8"/><rect x="753" y="313" width="0.8" height="6"/></g>
<polyline fill="none" stroke="#d43cd4" stroke-width="1.3" points="764.5,320.1 765.2,322.6 765.9,325.0 766.6,327.4 767.3,329.6 768.0,331.7 768.7,333.6 769.4,335.3 770.1,336.8 770.8,338.0 771.5,339.1 772.2,339.8 772.9,340.3 773.6,340.5 774.3,340.4 775.0,340.1 775.7,339.5 776.4,338.6 777.1,337.4 777.8,336.1 778.5,334.5 779.2,332.7 779.9,330.7 780.6,328.5 781.3,326.2 782.0,323.8 782.7,321.3 783.4,318.8 784.1,316.2 784.8,313.7 785.5,311.1 786.2,308.7 786.9,306.3 787.6,304.0 788.3,301.9 789.0,300.0 789.7,298.2 790.4,296.7 791.1,295.4 791.8,294.3 792.5,293.5 793.2,293.0 793.9,292.7 794.6,292.7 795.3,293.0 796.0,293.6 796.7,294.4 797.4,295.5 798.1,296.8 798.8,298.4 799.5,300.1 800.2,302.1 800.9,304.2 801.6,306.5 802.3,308.8 803.0,311.3 803.7,313.9 804.4,316.4 805.1,319.0 805.8,321.5 806.5,324.0 807.2,326.4 807.9,328.7 808.6,330.8 809.3,332.8 810.0,334.6 810.7,336.2 811.4,337.5 812.1,338.7 812.8,339.5 813.5,340.1 814.2,340.4 814.9,340.5 815.6,340.3 816.3,339.8 817.0,339.0 817.7,338.0 818.4,336.7 819.1,335.2 819.8,333.5 820.5,331.6 821.2,329.5 821.9,327.2 822.6,324.9 823.3,322.4 824.0,319.9 824.7,317.3 825.4,314.8 826.1,312.2 826.8,309.7 827.5,307.3 828.2,305.0 828.9,302.8 829.6,300.8 830.3,299.0 831.0,297.3 831.7,295.9 832.4,294.8 833.1,293.8 833.8,293.2 834.5,292.8 835.2,292.7 835.9,292.9 836.6,293.3 837.3,294.0 838.0,295.0 838.7,296.2 839.4,297.7 840.1,299.3 840.8,301.2 841.5,303.3 842.2,305.5 842.9,307.8 843.6,310.3 844.3,312.8 845.0,315.3 845.7,317.9 846.4,320.4"/>
<path d="M856 357 L858.5 354.5" stroke="#555" stroke-width="0.8"/>

<rect x="753" y="429" width="153" height="87" fill="#383838"/>
<rect x="748.5" y="424.5" width="152" height="86" fill="#fff" stroke="#000" stroke-width="1.2"/>
</svg>
<svg class="a" style="left:11px;top:255px" width="150" height="85" viewBox="97 129 616 347" preserveAspectRatio="none"><use href="#chartg"/></svg>
</div>
<div class="jt" style="top:220px">09/05/2015 14:05:33</div>
<div class="jt" style="top:236px;width:158px;overflow:hidden;letter-spacing:0.56px"><span style="font-size:10px;margin-right:1.6px">&lt;</span>Chcete-li vložit popisek, klikněte sem</div>
<div class="jt" style="top:258px">Zobrazena Druh pohybu</div>
<div class="jt" style="top:369px">09/05/2015 14:06:12</div>
<div class="jt" style="top:385px;width:158px;overflow:hidden;letter-spacing:0.56px"><span style="font-size:10px;margin-right:1.6px">&lt;</span>Chcete-li vložit popisek, klikněte sem</div>
<div class="jt" style="top:408px;width:157px;overflow:hidden">Zobrazena Měření tuhosti pružiny</div>
<div class="jt" style="top:518px">09/05/2015 14:06:35</div>
<div class="jt" style="top:534px;width:158px;overflow:hidden;letter-spacing:0.56px"><span style="font-size:10px;margin-right:1.6px">&lt;</span>Chcete-li vložit popisek, klikněte sem</div>

<div class="a" style="left:910.5px;top:171px;width:14px;height:381px;background:#6c6c6c;border:1px solid #5a5a5a;box-sizing:border-box"></div>
<div class="a" style="left:911px;top:171px;width:14px;height:16px;background:linear-gradient(#6a6a6a,#3e3e3e);border:1px solid #777;box-sizing:border-box"></div>
<div class="a" style="left:916px;top:177px;width:3px;height:3px;background:#aaa"></div>
<div class="a" style="left:911px;top:187px;width:13px;height:60px;background:#bdbdbd"></div>
<div class="a" style="left:912px;top:240px;width:11px;height:298px;background:linear-gradient(90deg,#5a5a5a,#474747 60%,#3e3e3e);border-radius:5.5px 5.5px 5px 5px"></div>
<div class="a" style="left:911px;top:535px;width:14px;height:17px;background:linear-gradient(#555,#444);border:1px solid #777;box-sizing:border-box"></div>
<div class="a" style="left:916px;top:543px;width:3px;height:3px;background:#aaa"></div>

<div class="rb" style="left:2px;top:29px;width:436px;height:46px;border-width:3px"></div>
<div class="rb" style="left:2px;top:83px;width:480px;height:23px;border-width:3px"></div>
<div class="rb" style="left:94px;top:126px;width:616px;height:347px;border-width:3px"></div>
<div class="rb" style="left:2px;top:115px;width:82px;height:212px;border-width:3px"></div>
<div class="rb" style="left:89px;top:488px;width:534px;height:69px;border-width:3px"></div>
<div class="rb" style="left:725px;top:79px;width:204px;height:475px;border-width:3px"></div>
<div class="rn" style="left:448px;top:38px;font-size:25px">1</div>
<div class="rn" style="left:493px;top:82px;font-size:25px">2</div>
<div class="rn" style="left:639px;top:103.5px;font-size:25px">3</div>
<div class="rn" style="left:34px;top:334px;font-size:25px">4</div>
<div class="rn" style="left:634px;top:510px;font-size:25px">5</div>
<div class="rn" style="left:798px;top:51px;font-size:25px">6</div>
<div class="a" style="left:0;top:0;width:1px;height:564px;background:#a8a8a8"></div>
<div class="a" style="left:935px;top:0;width:1px;height:564px;background:#a8a8a8"></div>
<div class="a" style="left:1px;top:31px;width:1px;height:532px;background:#333"></div>
<div class="a" style="left:1px;top:562px;width:934px;height:1px;background:#333"></div>
<div class="a" style="left:0;top:563px;width:936px;height:1px;background:#a8a8a8"></div>

</body></html>
